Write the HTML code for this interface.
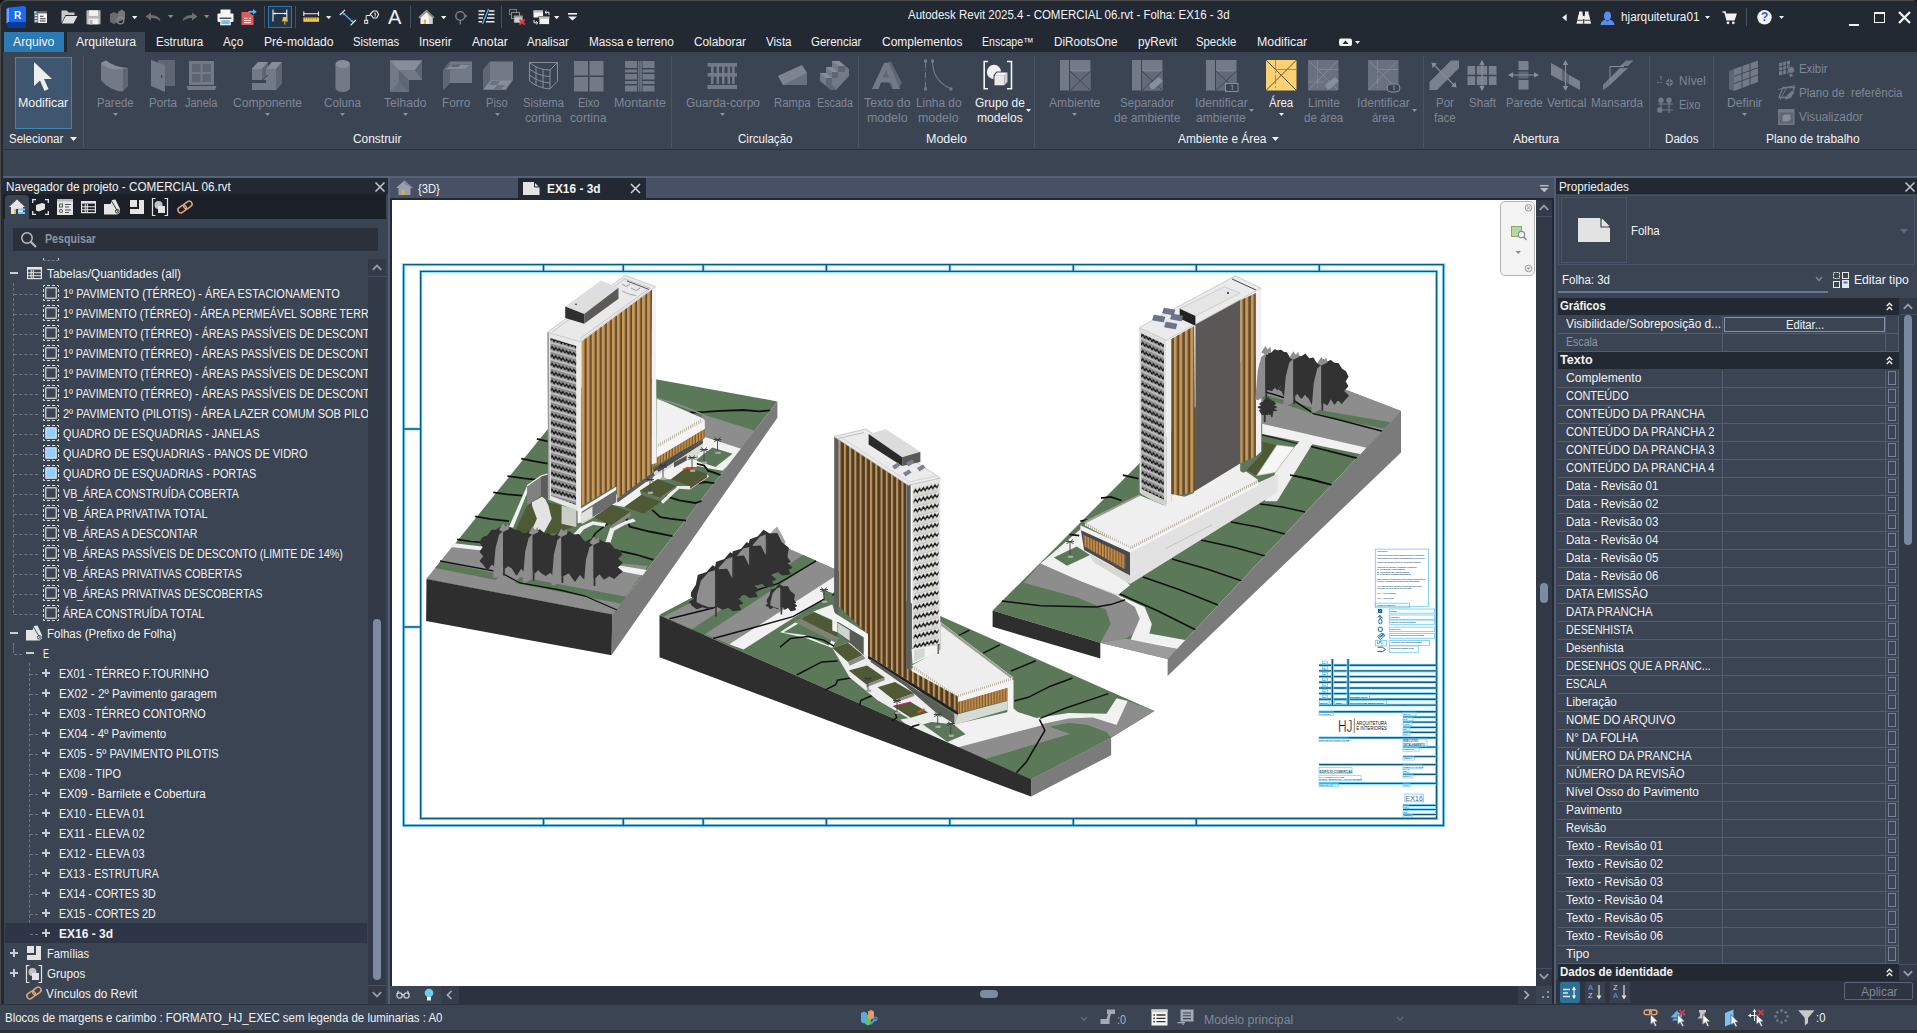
<!DOCTYPE html>
<html><head><meta charset="utf-8"><title>Autodesk Revit 2025.4 - COMERCIAL 06.rvt - Folha: EX16 - 3d</title><style>
html,body{margin:0;padding:0}
body{width:1917px;height:1033px;position:relative;overflow:hidden;background:#3b4453;font-family:"Liberation Sans",sans-serif;font-size:12px;line-height:16px;color:#f2f2f2}
.t{position:absolute;white-space:pre;display:block;transform-origin:0 0}
.r{position:absolute}
svg{position:absolute;overflow:visible}
</style></head><body>
<!-- sec_chrome -->
<div class="r" style="left:0px;top:0px;width:1917px;height:52px;background:#222933;"></div>
<span class="t" style="left:907.7px;top:7.3px;transform:scaleX(0.9560);color:#f2f2f2;">Autodesk Revit 2025.4 - COMERCIAL 06.rvt - Folha: EX16 - 3d</span>
<span class="t" style="left:1620.5px;top:9.1px;transform:scaleX(0.9806);color:#f2f2f2;">hjarquitetura01</span>
<div class="r" style="left:1849px;top:24px;width:10px;height:2px;background:#f2f2f2;"></div>
<div class="r" style="left:1874px;top:12px;width:9px;height:8px;border:1.6px solid #f2f2f2;border-top-width:2.4px"></div>
<svg style="left:1898px;top:10.5px" width="13" height="13"><path d="M1 1L12 12M12 1L1 12" stroke="#f2f2f2" stroke-width="2.3"/></svg>
<div class="r" style="left:4px;top:32px;width:60px;height:20px;background:#2b7ab3;"></div>
<span class="t" style="left:13.0px;top:34.1px;transform:scaleX(1.0166);color:#f2f2f2;">Arquivo</span>
<div class="r" style="left:67px;top:32px;width:78px;height:20px;background:#3b4453;"></div>
<span class="t" style="left:76.0px;top:34.1px;transform:scaleX(1.0230);color:#f2f2f2;">Arquitetura</span>
<span class="t" style="left:156.0px;top:34.1px;transform:scaleX(0.9703);color:#f2f2f2;">Estrutura</span>
<span class="t" style="left:223.3px;top:34.1px;transform:scaleX(0.9785);color:#f2f2f2;">Aço</span>
<span class="t" style="left:263.5px;top:34.1px;transform:scaleX(1.0104);color:#f2f2f2;">Pré-moldado</span>
<span class="t" style="left:352.9px;top:34.1px;transform:scaleX(0.9353);color:#f2f2f2;">Sistemas</span>
<span class="t" style="left:419.1px;top:34.1px;transform:scaleX(0.9758);color:#f2f2f2;">Inserir</span>
<span class="t" style="left:471.6px;top:34.1px;transform:scaleX(1.0133);color:#f2f2f2;">Anotar</span>
<span class="t" style="left:527.4px;top:34.1px;transform:scaleX(0.9628);color:#f2f2f2;">Analisar</span>
<span class="t" style="left:589.2px;top:34.1px;transform:scaleX(0.9771);color:#f2f2f2;">Massa e terreno</span>
<span class="t" style="left:693.9px;top:34.1px;transform:scaleX(0.9859);color:#f2f2f2;">Colaborar</span>
<span class="t" style="left:765.8px;top:34.1px;transform:scaleX(0.9659);color:#f2f2f2;">Vista</span>
<span class="t" style="left:811.4px;top:34.1px;transform:scaleX(0.9566);color:#f2f2f2;">Gerenciar</span>
<span class="t" style="left:881.8px;top:34.1px;transform:scaleX(0.9977);color:#f2f2f2;">Complementos</span>
<span class="t" style="left:982.3px;top:34.1px;transform:scaleX(0.8793);color:#f2f2f2;">Enscape™</span>
<span class="t" style="left:1053.9px;top:34.1px;transform:scaleX(0.9729);color:#f2f2f2;">DiRootsOne</span>
<span class="t" style="left:1137.5px;top:34.1px;transform:scaleX(0.9733);color:#f2f2f2;">pyRevit</span>
<span class="t" style="left:1196.4px;top:34.1px;transform:scaleX(0.9443);color:#f2f2f2;">Speckle</span>
<span class="t" style="left:1256.8px;top:34.1px;transform:scaleX(1.0309);color:#f2f2f2;">Modificar</span>
<svg style="left:1339px;top:38px" width="22" height="9"><rect x="0" y="0.5" width="13" height="7.5" rx="2" fill="#f2f2f2"/><polygon points="3.5,6 6.5,2.5 9.5,6" fill="#222933"/><polygon points="16,3 21,3 18.5,6" fill="#f2f2f2"/></svg>
<div class="r" style="left:0px;top:52px;width:1917px;height:98px;background:#3b4453;"></div>
<div class="r" style="left:4px;top:149px;width:1913px;height:1px;background:#2a313d;"></div>
<div class="r" style="left:0px;top:150px;width:1917px;height:27px;background:#3b4453;"></div>
<div class="r" style="left:3px;top:176px;width:1914px;height:2px;background:#566275;"></div>
<div class="r" style="left:83px;top:56px;width:1px;height:92px;background:#4a5466;"></div>
<div class="r" style="left:671px;top:56px;width:1px;height:92px;background:#4a5466;"></div>
<div class="r" style="left:858px;top:56px;width:1px;height:92px;background:#4a5466;"></div>
<div class="r" style="left:1034px;top:56px;width:1px;height:92px;background:#4a5466;"></div>
<div class="r" style="left:1423px;top:56px;width:1px;height:92px;background:#4a5466;"></div>
<div class="r" style="left:1649px;top:56px;width:1px;height:92px;background:#4a5466;"></div>
<div class="r" style="left:1713px;top:56px;width:1px;height:92px;background:#4a5466;"></div>
<div class="r" style="left:15px;top:57px;width:55px;height:70px;background:#3e566f;border:1px solid #3b88b8"></div>
<svg style="left:33px;top:61px" width="22" height="32"><polygon points="1,1 1,25 7,19.5 11.5,30 15.5,28 11,18 19,18" fill="#eeeeee"/></svg>
<span class="t" style="left:18.4px;top:94.5px;transform:scaleX(1.0309);color:#f2f2f2;">Modificar</span>
<span class="t" style="left:9.0px;top:130.5px;transform:scaleX(0.9577);color:#f2f2f2;">Selecionar</span>
<svg style="left:70.2px;top:136.8px" width="7" height="4.0"><polygon points="0,0 7,0 3.5,4.0" fill="#f2f2f2"/></svg>
<span class="t" style="left:96.7px;top:94.5px;transform:scaleX(0.9443);color:#7e8796;">Parede</span>
<svg style="left:112.5px;top:113.0px" width="5" height="3.0"><polygon points="0,0 5,0 2.5,3.0" fill="#8a93a1"/></svg>
<span class="t" style="left:149.0px;top:94.5px;transform:scaleX(0.9777);color:#7e8796;">Porta</span>
<span class="t" style="left:185.3px;top:94.5px;transform:scaleX(0.9159);color:#7e8796;">Janela</span>
<span class="t" style="left:232.5px;top:94.5px;transform:scaleX(1.0038);color:#7e8796;">Componente</span>
<svg style="left:264.5px;top:113.0px" width="5" height="3.0"><polygon points="0,0 5,0 2.5,3.0" fill="#8a93a1"/></svg>
<span class="t" style="left:324.0px;top:94.5px;transform:scaleX(0.9719);color:#7e8796;">Coluna</span>
<svg style="left:340.0px;top:113.0px" width="5" height="3.0"><polygon points="0,0 5,0 2.5,3.0" fill="#8a93a1"/></svg>
<span class="t" style="left:384.3px;top:94.5px;transform:scaleX(1.0080);color:#7e8796;">Telhado</span>
<svg style="left:403.0px;top:113.0px" width="5" height="3.0"><polygon points="0,0 5,0 2.5,3.0" fill="#8a93a1"/></svg>
<span class="t" style="left:441.9px;top:94.5px;transform:scaleX(0.9836);color:#7e8796;">Forro</span>
<span class="t" style="left:486.2px;top:94.5px;transform:scaleX(0.9294);color:#7e8796;">Piso</span>
<svg style="left:494.5px;top:113.0px" width="5" height="3.0"><polygon points="0,0 5,0 2.5,3.0" fill="#8a93a1"/></svg>
<span class="t" style="left:523.0px;top:94.5px;transform:scaleX(0.9473);color:#7e8796;">Sistema</span>
<span class="t" style="left:525.2px;top:109.5px;transform:scaleX(1.0165);color:#7e8796;">cortina</span>
<span class="t" style="left:577.8px;top:94.5px;transform:scaleX(0.9189);color:#7e8796;">Eixo</span>
<span class="t" style="left:570.2px;top:109.5px;transform:scaleX(1.0165);color:#7e8796;">cortina</span>
<span class="t" style="left:614.1px;top:94.5px;transform:scaleX(1.0354);color:#7e8796;">Montante</span>
<span class="t" style="left:685.5px;top:94.5px;transform:scaleX(0.9998);color:#7e8796;">Guarda-corpo</span>
<svg style="left:720.0px;top:113.0px" width="5" height="3.0"><polygon points="0,0 5,0 2.5,3.0" fill="#8a93a1"/></svg>
<span class="t" style="left:773.7px;top:94.5px;transform:scaleX(0.9481);color:#7e8796;">Rampa</span>
<span class="t" style="left:816.6px;top:94.5px;transform:scaleX(0.8968);color:#7e8796;">Escada</span>
<span class="t" style="left:863.8px;top:94.5px;transform:scaleX(1.0244);color:#7e8796;">Texto do</span>
<span class="t" style="left:866.7px;top:109.5px;transform:scaleX(1.0325);color:#7e8796;">modelo</span>
<span class="t" style="left:915.7px;top:94.5px;transform:scaleX(0.9886);color:#7e8796;">Linha do</span>
<span class="t" style="left:918.2px;top:109.5px;transform:scaleX(1.0325);color:#7e8796;">modelo</span>
<span class="t" style="left:974.6px;top:94.5px;transform:scaleX(0.9957);color:#f2f2f2;">Grupo de</span>
<span class="t" style="left:976.6px;top:109.5px;transform:scaleX(1.0082);color:#f2f2f2;">modelos</span>
<svg style="left:1026.405808733259px;top:109.0px" width="5" height="3.0"><polygon points="0,0 5,0 2.5,3.0" fill="#f2f2f2"/></svg>
<span class="t" style="left:1048.8px;top:94.5px;transform:scaleX(1.0127);color:#7e8796;">Ambiente</span>
<svg style="left:1072.0px;top:113.0px" width="5" height="3.0"><polygon points="0,0 5,0 2.5,3.0" fill="#8a93a1"/></svg>
<span class="t" style="left:1120.4px;top:94.5px;transform:scaleX(0.9685);color:#7e8796;">Separador</span>
<span class="t" style="left:1114.3px;top:109.5px;transform:scaleX(1.0055);color:#7e8796;">de ambiente</span>
<span class="t" style="left:1194.7px;top:94.5px;transform:scaleX(1.0129);color:#7e8796;">Identificar</span>
<span class="t" style="left:1196.1px;top:109.5px;transform:scaleX(1.0086);color:#7e8796;">ambiente</span>
<svg style="left:1249.3477311789773px;top:109.0px" width="5" height="3.0"><polygon points="0,0 5,0 2.5,3.0" fill="#8a93a1"/></svg>
<span class="t" style="left:1268.9px;top:94.5px;transform:scaleX(0.9553);color:#f2f2f2;">Área</span>
<svg style="left:1278.5px;top:113.0px" width="5" height="3.0"><polygon points="0,0 5,0 2.5,3.0" fill="#f2f2f2"/></svg>
<span class="t" style="left:1308.0px;top:94.5px;transform:scaleX(1.0015);color:#7e8796;">Limite</span>
<span class="t" style="left:1304.4px;top:109.5px;transform:scaleX(0.9651);color:#7e8796;">de área</span>
<span class="t" style="left:1357.2px;top:94.5px;transform:scaleX(1.0129);color:#7e8796;">Identificar</span>
<span class="t" style="left:1372.2px;top:109.5px;transform:scaleX(0.9435);color:#7e8796;">área</span>
<svg style="left:1411.8477311789773px;top:109.0px" width="5" height="3.0"><polygon points="0,0 5,0 2.5,3.0" fill="#8a93a1"/></svg>
<span class="t" style="left:1435.6px;top:94.5px;transform:scaleX(0.9567);color:#7e8796;">Por</span>
<span class="t" style="left:1433.7px;top:109.5px;transform:scaleX(0.9559);color:#7e8796;">face</span>
<span class="t" style="left:1469.0px;top:94.5px;transform:scaleX(0.9639);color:#7e8796;">Shaft</span>
<span class="t" style="left:1505.7px;top:94.5px;transform:scaleX(0.9443);color:#7e8796;">Parede</span>
<span class="t" style="left:1546.8px;top:94.5px;transform:scaleX(1.0003);color:#7e8796;">Vertical</span>
<span class="t" style="left:1591.4px;top:94.5px;transform:scaleX(0.9765);color:#7e8796;">Mansarda</span>
<span class="t" style="left:1726.9px;top:94.5px;transform:scaleX(1.0137);color:#7e8796;">Definir</span>
<svg style="left:1742.0px;top:113.0px" width="5" height="3.0"><polygon points="0,0 5,0 2.5,3.0" fill="#8a93a1"/></svg>
<span class="t" style="left:353.3px;top:130.5px;transform:scaleX(0.9936);color:#f2f2f2;">Construir</span>
<span class="t" style="left:737.8px;top:130.5px;transform:scaleX(0.9607);color:#f2f2f2;">Circulação</span>
<span class="t" style="left:925.5px;top:130.5px;transform:scaleX(1.0417);color:#f2f2f2;">Modelo</span>
<span class="t" style="left:1177.8px;top:130.5px;transform:scaleX(0.9889);color:#f2f2f2;">Ambiente e Área</span>
<span class="t" style="left:1513.4px;top:130.5px;transform:scaleX(1.0058);color:#f2f2f2;">Abertura</span>
<span class="t" style="left:1664.7px;top:130.5px;transform:scaleX(0.9693);color:#f2f2f2;">Dados</span>
<span class="t" style="left:1765.7px;top:130.5px;transform:scaleX(0.9952);color:#f2f2f2;">Plano de trabalho</span>
<svg style="left:1271.5px;top:136.8px" width="7" height="4.0"><polygon points="0,0 7,0 3.5,4.0" fill="#f2f2f2"/></svg>
<span class="t" style="left:1679.0px;top:72.8px;transform:scaleX(0.9782);color:#7e8796;">Nível</span>
<span class="t" style="left:1679.0px;top:96.8px;transform:scaleX(0.9189);color:#7e8796;">Eixo</span>
<span class="t" style="left:1799.0px;top:60.8px;transform:scaleX(0.9517);color:#7e8796;">Exibir</span>
<span class="t" style="left:1799.0px;top:84.8px;transform:scaleX(0.9637);color:#7e8796;">Plano de  referência</span>
<span class="t" style="left:1799.0px;top:109.1px;transform:scaleX(0.9806);color:#7e8796;">Visualizador</span>
<svg style="left:6px;top:6px" width="21" height="23"><polygon points="3,1.5 18,0 20,1 20,16 3,16" fill="#186bf2"/><polygon points="0.5,3 3,1.5 3,16 0.5,17.5" fill="#6fa0f6"/><polygon points="0.5,17.5 3,16 20,16 20,22 2,22" fill="#0a3b9c"/></svg>
<span class="t" style="left:13.5px;top:8.0px;transform:scaleX(0.8788);color:#ffffff;font-size:11.5px;line-height:15.33px;font-weight:bold;">R</span>
<svg style="left:32.5px;top:10px" width="15" height="14"><rect x="1" y="1" width="13" height="12" fill="#f4f4f4"/><rect x="1" y="1" width="13" height="2.4" fill="#5d6674"/><rect x="1.3" y="1.3" width="2" height="1.8" fill="#a8dcff"/><rect x="1" y="3.4" width="4.2" height="9.6" fill="#5d6674"/><rect x="1.8" y="4.6" width="2.6" height="1.5" fill="#e8e8e8"/><rect x="1.8" y="7.4" width="2.6" height="1.5" fill="#e8e8e8"/><rect x="1.8" y="10.2" width="2.6" height="1.5" fill="#e8e8e8"/><path d="M7 6.2H10.5M7 8.7H12.6M7 11H12.6" stroke="#333" stroke-width="1.1"/></svg>
<svg style="left:60.5px;top:9.5px" width="17" height="14"><polygon points="0.5,0.5 6,0.5 7.5,2.5 13.5,2.5 13.5,5 4.5,5 0.5,13" fill="#c9c9c9"/><polygon points="4.8,6 16.5,6 12.5,13.5 0.8,13.5" fill="#dddddd"/></svg>
<svg style="left:85.5px;top:9.5px" width="15" height="15"><rect x="0.5" y="0.3" width="14" height="14" fill="#b7b7b7"/><rect x="3" y="0.3" width="9" height="5.6" fill="#f2f2f2"/><rect x="2.6" y="8.6" width="9.8" height="5.7" fill="#f2f2f2"/><rect x="3.6" y="9.8" width="3" height="4.5" fill="#b7b7b7"/></svg>
<svg style="left:108.5px;top:9px" width="18" height="16"><polygon points="1,5 5,3 9,5 9,13 5,15 1,13" fill="#6a6a6a"/><polygon points="9,3 13,0.5 16,3 16,10 9,13" fill="#777"/><circle cx="11.5" cy="11.5" r="3.3" fill="none" stroke="#8a8a8a" stroke-width="1.2"/></svg>
<svg style="left:132.10000000000002px;top:15.6px" width="5.4" height="3.2"><polygon points="0,0 5.4,0 2.7,3.2" fill="#f0f0f0"/></svg>
<svg style="left:144.5px;top:12px" width="17" height="10"><path d="M6 0.5L0.5 4.5L6 8.5V6Q12 5.5 15.5 9.5Q15 3.5 6 3Z" fill="#6d6d6d"/></svg>
<svg style="left:167.60000000000002px;top:14.6px" width="5.4" height="3.2"><polygon points="0,0 5.4,0 2.7,3.2" fill="#8a8a8a"/></svg>
<svg style="left:180.5px;top:12px" width="17" height="10"><path d="M11 0.5L16.5 4.5L11 8.5V6Q5 5.5 1.5 9.5Q2 3.5 11 3Z" fill="#6d6d6d"/></svg>
<svg style="left:203.70000000000002px;top:14.6px" width="5.4" height="3.2"><polygon points="0,0 5.4,0 2.7,3.2" fill="#8a8a8a"/></svg>
<svg style="left:216.5px;top:8.5px" width="17" height="17"><rect x="3.5" y="0.5" width="10" height="5" fill="#f4f4f4"/><rect x="0.5" y="4.5" width="16" height="8.5" rx="1" fill="#f4f4f4"/><rect x="3.2" y="10" width="10.6" height="6.3" fill="#f4f4f4"/><rect x="4.4" y="11.2" width="8.2" height="3.9" fill="#6ebcf4"/><rect x="2.6" y="8.6" width="11.8" height="1.2" fill="#222933"/></svg>
<svg style="left:241px;top:9px" width="17" height="17"><polygon points="0.5,3 8,3 11,6 12.5,6 12.5,16 0.5,16" fill="#e05a5a"/><path d="M3 9.3H6.5M3 11.5H10M3 13.6H10M7.8 9.3H10" stroke="#fbdada" stroke-width="1.1"/><path d="M7.5 2.8H13" stroke="#5fb2f2" stroke-width="1.8"/><polygon points="12,0 15.8,2.8 12,5.6" fill="#5fb2f2"/></svg>
<div class="r" style="left:264px;top:6px;width:1px;height:22px;background:#474f5e"></div>
<div class="r" style="left:268px;top:6px;width:22px;height:20px;background:#22364b;border:1px solid #2c78ae"></div>
<svg style="left:271.5px;top:8.5px" width="18" height="18"><path d="M1 0.5V12.5M14.8 0.5V12.5M1 4.5H14.8" stroke="#f0f0f0" stroke-width="1.1" fill="none"/><polygon points="1,4.5 3.5,3.3 3.5,5.7" fill="#f0f0f0"/><polygon points="14.8,4.5 12.3,3.3 12.3,5.7" fill="#f0f0f0"/><path d="M10.8 8H14.8V10.5L15.8 12.3H9.8L10.8 10.5Z" fill="#f2c14c"/><path d="M12.8 12.3V15.5" stroke="#f2c14c" stroke-width="1"/></svg>
<div class="r" style="left:295px;top:6px;width:1px;height:22px;background:#474f5e"></div>
<svg style="left:302.5px;top:11px" width="17" height="12"><path d="M0.8 0.5V5M15.5 0.5V5M0.8 2.7H15.5" stroke="#f2f2f2" stroke-width="1.1" fill="none"/><rect x="0.3" y="6.5" width="15.7" height="4.3" fill="#f1c653"/><path d="M2.5 6.5V8.5M4.7 6.5V8.5M6.9 6.5V8.5M9.1 6.5V8.5M11.3 6.5V8.5M13.5 6.5V8.5" stroke="#8a6d1f" stroke-width="0.7"/></svg>
<svg style="left:325.90000000000003px;top:15.6px" width="5.4" height="3.2"><polygon points="0,0 5.4,0 2.7,3.2" fill="#f0f0f0"/></svg>
<svg style="left:338.5px;top:8.5px" width="18" height="17"><path d="M3.5 3.5L14.5 13.5" stroke="#52b0f0" stroke-width="1.3"/><polygon points="3.5,3.5 6.6,4.4 4.6,6.4" fill="#52b0f0"/><polygon points="14.5,13.5 11.4,12.6 13.4,10.6" fill="#52b0f0"/><path d="M0.8 6L6 0.8M11.5 16.3L16.8 11" stroke="#f0f0f0" stroke-width="1.1"/></svg>
<svg style="left:363.5px;top:10px" width="15" height="14"><polygon points="6.3,4 9.3,1 12.8,1 14.6,4.5 12.8,8 9.3,8" fill="none" stroke="#f0f0f0" stroke-width="1.1"/><path d="M6.3 5.5H2.2V10.5" stroke="#f0f0f0" stroke-width="1" fill="none"/><rect x="0.7" y="10.3" width="3" height="3" fill="none" stroke="#f0f0f0" stroke-width="1"/><path d="M10.2 3.4L11.2 2.9V6.5" stroke="#f0f0f0" stroke-width="0.9" fill="none"/></svg>
<span class="t" style="left:388.2px;top:4.4px;transform:scaleX(1.0302);color:#f0f0f0;font-size:19.5px;line-height:26.0px;">A</span>
<div class="r" style="left:410px;top:6px;width:1px;height:22px;background:#474f5e"></div>
<svg style="left:418px;top:8.5px" width="17" height="16"><polygon points="2.5,8 8.5,2.5 14.5,8 14.5,15 2.5,15" fill="#f4f4f4"/><polygon points="0.3,8.3 8.5,0.5 16.5,8.3 14.8,9.5 8.5,3.5 2,9.5" fill="#9a9a9a"/><polygon points="8.5,0.5 16.5,8.3 14.5,8 8.5,2.5" fill="#7a7a7a"/><rect x="5.8" y="10.5" width="2.3" height="4.5" fill="#e3b53e"/><polygon points="8.5,3.5 14.5,9 14.5,15 11,15 11,9" fill="#d0d0d0"/></svg>
<svg style="left:440.90000000000003px;top:15.6px" width="5.4" height="3.2"><polygon points="0,0 5.4,0 2.7,3.2" fill="#f0f0f0"/></svg>
<svg style="left:455px;top:9px" width="13" height="16"><circle cx="5.2" cy="7" r="4.4" fill="none" stroke="#8a8a8a" stroke-width="1.3"/><polygon points="9.2,4.4 12.6,7 9.2,9.6" fill="#777"/><path d="M5.2 11.4V15.5" stroke="#8a8a8a" stroke-width="1.2"/></svg>
<svg style="left:477.5px;top:9px" width="17" height="15"><path d="M0.5 2H7M0.5 5.5H6M0.5 9H5M0.5 12.7H4M11 2H16.5M10 5.5H16.5M9 9H16.5M8 12.7H16.5" stroke="#f0f0f0" stroke-width="1.5"/><path d="M10.5 0L4.5 15" stroke="#52b0f0" stroke-width="1.2"/></svg>
<div class="r" style="left:501px;top:6px;width:1px;height:22px;background:#474f5e"></div>
<svg style="left:508.5px;top:9px" width="17" height="16"><rect x="0.5" y="0.5" width="7" height="5" fill="none" stroke="#7a7a7a" stroke-width="1"/><rect x="2.5" y="3.5" width="8" height="6" fill="#222933" stroke="#8a8a8a" stroke-width="1"/><rect x="4.8" y="6.5" width="9" height="7.5" fill="#9a9a9a"/><rect x="5.8" y="8.5" width="7" height="4.5" fill="#cfcfcf"/><path d="M10.5 10.5L15.8 15.5M15.8 10.5L10.5 15.5" stroke="#e8343c" stroke-width="1.9"/></svg>
<svg style="left:532.5px;top:9.5px" width="18" height="15"><rect x="0.5" y="0.5" width="9.5" height="7" fill="#f2f2f2"/><rect x="0.5" y="0.5" width="9.5" height="2" fill="#bcbcbc"/><rect x="6" y="6.5" width="10.5" height="8" fill="#f2f2f2" stroke="#222933" stroke-width="0.8"/><rect x="6" y="6.5" width="10.5" height="2.2" fill="#bcbcbc"/><path d="M12 2.3H16V4.8M12 2.3L13.6 0.8M12 2.3L13.6 3.8M4.8 12.8H1V10M4.8 12.8L3.2 11.3M4.8 12.8L3.2 14.3" stroke="#f2f2f2" stroke-width="1" fill="none"/></svg>
<svg style="left:554.0px;top:15.6px" width="5.4" height="3.2"><polygon points="0,0 5.4,0 2.7,3.2" fill="#f0f0f0"/></svg>
<svg style="left:567.5px;top:12.5px" width="9" height="8"><rect x="0" y="0" width="9" height="1.6" fill="#f0f0f0"/><polygon points="0,3.6 9,3.6 4.5,7.6" fill="#f0f0f0"/></svg>
<svg style="left:1561.5px;top:13.5px" width="5" height="7.5"><polygon points="4.6,0 4.6,7.2 0.2,3.6" fill="#f0f0f0"/></svg>
<svg style="left:1575.5px;top:11px" width="16" height="13.5"><rect x="3" y="0.5" width="3.5" height="4" fill="#f0f0f0"/><rect x="9" y="0.5" width="3.5" height="4" fill="#f0f0f0"/><path d="M2.5 3.5H6.8L7.3 12.8H0.5ZM8.7 3.5H13L15 12.8H8.2Z" fill="#f0f0f0"/><rect x="6.6" y="5" width="2.2" height="3" fill="#f0f0f0"/><path d="M1.4 9.3H6.6M8.8 9.3H14" stroke="#222933" stroke-width="0.9"/></svg>
<svg style="left:1599.5px;top:10.5px" width="15" height="14"><ellipse cx="7.5" cy="5" rx="3.6" ry="4.6" fill="#5a8df0"/><path d="M0.5 14Q1 9.5 5.3 8.8L7.5 10.5L9.7 8.8Q14 9.5 14.5 14Z" fill="#5a8df0"/></svg>
<svg style="left:1704.9px;top:16.2px" width="5" height="3"><polygon points="0,0 5,0 2.5,3" fill="#f0f0f0"/></svg>
<svg style="left:1721.5px;top:11px" width="15" height="14"><path d="M0.5 1H3L5 8.8H12L13.8 3.2H4" fill="none" stroke="#f2f2f2" stroke-width="1.6"/><polygon points="4,3.2 13.8,3.2 12,8.8 5.2,8.8" fill="#f2f2f2"/><circle cx="6" cy="11.8" r="1.4" fill="#f2f2f2"/><circle cx="11.3" cy="11.8" r="1.4" fill="#f2f2f2"/></svg>
<div class="r" style="left:1746px;top:8px;width:1px;height:18px;background:#4b5362"></div>
<svg style="left:1756.5px;top:10px" width="15" height="15"><circle cx="7.5" cy="7.3" r="7.2" fill="#f4f4f4"/></svg>
<span class="t" style="left:1761.0px;top:8.8px;transform:scaleX(0.9453);color:#2a56c8;font-size:12.5px;line-height:16.67px;font-weight:bold;">?</span>
<svg style="left:1779.2px;top:16.2px" width="5" height="3"><polygon points="0,0 5,0 2.5,3" fill="#f0f0f0"/></svg>
<svg style="left:100px;top:60px" width="29" height="32"><path d="M1 3L6 0.5Q14 8 28 8V26Q14 31 1 20Z" fill="#727a88"/><path d="M23 8.6L28 8V26L23 31.5Z" fill="#5e6674"/><path d="M1 3Q10 12 23 8.6V31.5Q10 31 1 20Z" fill="#727a88"/><path d="M1 3L6 0.5Q14 7 28 8L23 8.6Q10 12 1 3Z" fill="#868e9b"/></svg>
<svg style="left:150px;top:59px" width="26" height="34"><rect x="8" y="1" width="17" height="26" fill="#5e6674"/><polygon points="1,1 15,6 15,33 1,27" fill="#727a88"/><rect x="11" y="16" width="1.2" height="3" fill="#3b4453"/></svg>
<svg style="left:186px;top:60px" width="31" height="31"><rect x="3" y="1" width="25" height="24" fill="#727a88"/><rect x="6" y="4" width="8.5" height="8" fill="#5e6674"/><rect x="16.5" y="4" width="8.5" height="8" fill="#5e6674"/><rect x="6" y="14" width="8.5" height="8" fill="#5e6674"/><rect x="16.5" y="14" width="8.5" height="8" fill="#5e6674"/><polygon points="0.5,26 30.5,26 29,30 2,30" fill="#727a88"/></svg>
<svg style="left:251px;top:61px" width="32" height="30"><polygon points="1,8 7,1 17,1 17,19 1,19" fill="#727a88"/><polygon points="1,8 7,1 17,1 11,8" fill="#868e9b"/><polygon points="11,8 17,1 17,14 11,19" fill="#5e6674"/><polygon points="1,22 15,22 15,8 21,1 31,1 31,22 25,29 1,29" fill="#727a88"/><polygon points="15,8 21,1 31,1 25,8" fill="#868e9b"/><polygon points="25,8 31,1 31,22 25,29" fill="#5e6674"/><path d="M1 19.5H11L17 14" stroke="#3b4453" stroke-width="1" fill="none"/></svg>
<svg style="left:335px;top:59px" width="16" height="34"><rect x="0.5" y="5" width="14.5" height="24" fill="#727a88"/><ellipse cx="7.75" cy="29" rx="7.25" ry="4" fill="#727a88"/><ellipse cx="7.75" cy="5" rx="7.25" ry="4" fill="#868e9b"/></svg>
<svg style="left:389px;top:60px" width="34" height="33"><polygon points="1,0.5 33,0.5 33,20 20,20 20,32 1,32" fill="#727a88"/><polygon points="1,0.5 33,0.5 26,10 10,10" fill="#868e9b"/><polygon points="33,0.5 33,20 26,10" fill="#5e6674"/><polygon points="10,10 20,20 20,32 10,22" fill="#5e6674"/><polygon points="1,32 10,22 20,32" fill="#5e6674" opacity="0.6"/></svg>
<svg style="left:442px;top:61px" width="31" height="30"><polygon points="8,0.5 30,0.5 30,22 8,22 1,29 1,9" fill="#727a88"/><polygon points="1,9 8,0.5 8,22 1,29" fill="#5e6674"/><polygon points="3,8.5 9,3.5 29,3.5 23,8.5" fill="#868e9b" stroke="#5e6674" stroke-width="0.6"/><polygon points="8,6 11,3.7 19,3.7 16,6" fill="#5e6674"/></svg>
<svg style="left:482px;top:61px" width="32" height="30"><polygon points="8,0.5 31,0.5 31,19 24,29 1,29 1,9" fill="#727a88"/><polygon points="1,9 8,0.5 8,19 1,29" fill="#5e6674"/><polygon points="2,28 9,19.5 30,19.5 23,28" fill="#868e9b"/><polygon points="7,24 10,20 18,20 15,24" fill="#5e6674" opacity="0.7"/><polygon points="15,24 23,24 20,28 12,28" fill="#5e6674" opacity="0.7"/></svg>
<svg style="left:528px;top:61px" width="31" height="31"><g fill="none" stroke="#868e9b" stroke-width="1"><path d="M1.5 1.5H29.5V20L22 28Q10 27 1.5 20Z"/><path d="M1.5 1.5Q10 9 22 9L29.5 1.5M22 9V28M1.5 8Q10 15 22 15.5M1.5 14Q10 21 22 22M8 5.5V24M15 8V26.5"/></g></svg>
<svg style="left:574px;top:61px" width="30" height="31"><rect x="0" y="0" width="14" height="14.5" fill="#727a88"/><rect x="15.5" y="0" width="14" height="14.5" fill="#727a88"/><rect x="0" y="16" width="14" height="14.5" fill="#727a88"/><rect x="15.5" y="16" width="14" height="14.5" fill="#727a88"/></svg>
<svg style="left:625px;top:61px" width="30" height="31"><rect x="0" y="0" width="12" height="7" fill="#727a88"/><rect x="17.5" y="0" width="12" height="7" fill="#727a88"/><rect x="0" y="8.5" width="12" height="3" fill="#727a88"/><rect x="17.5" y="8.5" width="12" height="3" fill="#727a88"/><rect x="0" y="13" width="12" height="5.5" fill="#727a88"/><rect x="17.5" y="13" width="12" height="5.5" fill="#727a88"/><rect x="0" y="20" width="12" height="3" fill="#727a88"/><rect x="17.5" y="20" width="12" height="3" fill="#727a88"/><rect x="0" y="24.5" width="12" height="6" fill="#727a88"/><rect x="17.5" y="24.5" width="12" height="6" fill="#727a88"/><rect x="13" y="0" width="1.5" height="30.5" fill="#727a88"/><rect x="15.2" y="0" width="1.5" height="30.5" fill="#727a88"/></svg>
<svg style="left:707px;top:62px" width="31" height="28"><rect x="0.5" y="1" width="29.5" height="3.6" fill="#727a88"/><rect x="0.5" y="11" width="29.5" height="3.6" fill="#727a88"/><rect x="0.5" y="23" width="29.5" height="4" fill="#727a88"/><rect x="4" y="4" width="2.6" height="18" fill="#727a88"/><rect x="9.5" y="4" width="2.6" height="18" fill="#727a88"/><rect x="15" y="4" width="2.6" height="18" fill="#727a88"/><rect x="20.5" y="4" width="2.6" height="18" fill="#727a88"/><rect x="25" y="4" width="2.6" height="18" fill="#727a88"/></svg>
<svg style="left:777px;top:64px" width="31" height="23"><polygon points="1,12 25,1 30,9 30,21 6,21" fill="#727a88"/><polygon points="1,12 25,1 30,9 6,21" fill="#868e9b" opacity="0.55"/><polygon points="6,21 30,9 30,21" fill="#5e6674" opacity="0.5"/></svg>
<svg style="left:819px;top:60px" width="31" height="31"><polygon points="13,1 20,1 30,9 30,16 17,30 12,30 1,21 1,13 7,13 7,7 13,7" fill="#727a88"/><polygon points="13,1 20,1 26,6 19,6" fill="#868e9b"/><polygon points="7,7 13,7 19,12 13,12" fill="#868e9b"/><polygon points="1,13 7,13 13,18 7,18" fill="#868e9b"/><polygon points="19,6 26,6 26,12 19,12" fill="#5e6674"/><polygon points="13,12 19,12 19,18 13,18" fill="#5e6674"/><polygon points="7,18 13,18 13,24 17,30 12,30 7,25" fill="#5e6674"/></svg>
<svg style="left:871px;top:61px" width="32" height="30"><polygon points="14,2 20,0.5 31,22 27,28 21,28 18,21 10,21 7,28 1,28" fill="#5e6674"/><path d="M1 28L13 2H18L29 28H22.5L20 21.5H10L7.5 28ZM12 16.5H18L15 8.5Z" fill="#727a88" fill-rule="evenodd"/></svg>
<svg style="left:923px;top:59px" width="31" height="33"><path d="M2.5 3V29" stroke="#727a88" stroke-width="1" stroke-dasharray="6 1.5 1 1.5" fill="none"/><path d="M9.5 3Q10 22 27.5 29.5" stroke="#727a88" stroke-width="1.1" fill="none"/><rect x="1" y="0.5" width="3" height="3" fill="#727a88"/><rect x="8" y="0.5" width="3" height="3" fill="#727a88"/><rect x="1" y="28.5" width="3" height="3" fill="#727a88"/><rect x="26.5" y="28.5" width="3" height="3" fill="#727a88"/></svg>
<svg style="left:983px;top:60px" width="30" height="30"><path d="M5 1.5H1.2V28.8H5M24 1.5H28.5V28.8H24" fill="none" stroke="#f3f3f3" stroke-width="1.6"/><circle cx="11" cy="12" r="7.2" fill="#f1f1f1"/><polygon points="10.5,15 13.5,11.5 25,11.5 25,22 22,25.5 10.5,25.5" fill="#3b4453"/><rect x="11.5" y="15.8" width="10" height="9.5" fill="#e9e9e9"/><polygon points="11.5,15.8 14,12.5 24.5,12.5 21.5,15.8" fill="#f6f6f6"/><polygon points="21.5,15.8 24.5,12.5 24.5,22 21.5,25.3" fill="#cfcfcf"/></svg>
<svg style="left:1060px;top:60px" width="31" height="31"><rect x="0" y="0" width="30.5" height="30.5" fill="#727a88"/><rect x="10" y="11" width="20.5" height="19.5" fill="#5e6674" opacity="0.75"/><path d="M9.5 0V30.5" stroke="#3b4453" stroke-width="1"/><path d="M10 11H30.5" stroke="#868e9b" stroke-width="0.8"/><path d="M10 11L30.5 30.5M30.5 11L10 30.5" stroke="#3b4453" stroke-width="0.9"/></svg>
<svg style="left:1132px;top:60px" width="32" height="33"><rect x="0" y="0" width="30.5" height="30.5" fill="#727a88"/><rect x="10" y="11" width="20.5" height="19.5" fill="#5e6674" opacity="0.75"/><path d="M9.5 0V30.5" stroke="#3b4453" stroke-width="1"/><path d="M10 11H30.5" stroke="#868e9b" stroke-width="0.8"/><path d="M10 11L30.5 30.5M30.5 11L10 30.5" stroke="#3b4453" stroke-width="0.9"/><polygon points="16,30 18,24 27,17 31,21 22,29" fill="#868e9b"/><polygon points="16,30 17,26.5 19.5,29" fill="#5e6674"/></svg>
<svg style="left:1205.5px;top:60px" width="33" height="33"><rect x="0" y="0" width="30.5" height="30.5" fill="#727a88"/><rect x="10" y="11" width="20.5" height="19.5" fill="#5e6674" opacity="0.75"/><path d="M9.5 0V30.5" stroke="#3b4453" stroke-width="1"/><path d="M10 11H30.5" stroke="#868e9b" stroke-width="0.8"/><path d="M10 11L30.5 30.5M30.5 11L10 30.5" stroke="#3b4453" stroke-width="0.9"/><rect x="19.5" y="23.5" width="12.5" height="8" fill="#3b4453" stroke="#868e9b" stroke-width="1"/><path d="M25 25.5L26.3 25V30" stroke="#868e9b" stroke-width="1" fill="none"/></svg>
<svg style="left:1266px;top:60px" width="31" height="31"><rect x="0" y="0" width="30.5" height="30.5" rx="1.5" fill="#fbd174"/><path d="M0.5 0.5L30 30M30 0.5L0.5 30" stroke="#5b5340" stroke-width="1"/><path d="M9.5 0V30.5" stroke="#8f7c4b" stroke-width="0.8" stroke-dasharray="9 2 2 2"/><path d="M9.5 9.5H30.5" stroke="#8f7c4b" stroke-width="0.8"/></svg>
<svg style="left:1308px;top:60px" width="33" height="33"><rect x="0" y="0" width="30.5" height="30.5" rx="1.5" fill="#697180"/><path d="M0.5 0.5L30 30M30 0.5L0.5 30" stroke="#868e9b" stroke-width="0.8"/><path d="M9.5 0V30.5" stroke="#868e9b" stroke-width="0.7" stroke-dasharray="9 2 2 2"/><path d="M9.5 9.5H30.5" stroke="#868e9b" stroke-width="0.7"/><path d="M0 22H16" stroke="#868e9b" stroke-width="0.7"/><polygon points="16,30 18,24 27,17 31,21 22,29" fill="#868e9b"/><polygon points="16,30 17,26.5 19.5,29" fill="#5e6674"/></svg>
<svg style="left:1368px;top:60px" width="33" height="33"><rect x="0" y="0" width="30.5" height="30.5" rx="1.5" fill="#697180"/><path d="M0.5 0.5L30 30M30 0.5L0.5 30" stroke="#868e9b" stroke-width="0.8"/><path d="M9.5 0V30.5" stroke="#868e9b" stroke-width="0.7" stroke-dasharray="9 2 2 2"/><path d="M9.5 9.5H30.5" stroke="#868e9b" stroke-width="0.7"/><rect x="19" y="24" width="13" height="8" rx="4" fill="#3b4453" stroke="#868e9b" stroke-width="1"/><path d="M24.8 26.2L26.1 25.7V30.3" stroke="#868e9b" stroke-width="1" fill="none"/></svg>
<svg style="left:0;top:0" width="0" height="0"><defs><pattern id="hh" width="2" height="2" patternUnits="userSpaceOnUse" patternTransform="rotate(45)"><rect width="2" height="2" fill="#727a88"/><rect width="0.7" height="2" fill="#868e9b"/></pattern></defs></svg>
<svg style="left:1429px;top:60px" width="32" height="32"><polygon points="22,0.5 30,0.5 30,8 8,30 0.5,30 0.5,22" fill="url(#hh)"/><path d="M4 4L26 26" stroke="#868e9b" stroke-width="1.1"/><polygon points="2.5,2.5 8,3.5 3.5,8" fill="#868e9b"/><polygon points="27.5,27.5 22,26.5 26.5,22" fill="#868e9b"/></svg>
<svg style="left:1467px;top:60px" width="31" height="32"><rect x="0.5" y="6" width="29" height="19" fill="url(#hh)"/><path d="M9 6V25M21 6V25M0.5 15.5H29.5" stroke="#3b4453" stroke-width="1.6"/><path d="M15 1V30" stroke="#868e9b" stroke-width="1.1"/><polygon points="12.3,5 15,0 17.7,5" fill="#868e9b"/><polygon points="12.3,26 15,31 17.7,26" fill="#868e9b"/></svg>
<svg style="left:1508px;top:60px" width="32" height="32"><rect x="10.5" y="1" width="10" height="9" fill="url(#hh)"/><rect x="10.5" y="20" width="10" height="9.5" fill="url(#hh)"/><rect x="10.5" y="11.5" width="10" height="7" fill="#5e6674"/><path d="M1 15H30" stroke="#868e9b" stroke-width="1.1"/><polygon points="5,12.3 0,15 5,17.7" fill="#868e9b"/><polygon points="26,12.3 31,15 26,17.7" fill="#868e9b"/></svg>
<svg style="left:1550px;top:60px" width="32" height="32"><polygon points="1,3 12,9 12,21 1,15" fill="url(#hh)"/><polygon points="19,15 30,21 30,30 19,24" fill="url(#hh)"/><polygon points="12,9 19,15 19,24 12,21" fill="#5e6674"/><path d="M15.5 1V30" stroke="#868e9b" stroke-width="1.1"/><polygon points="12.8,5 15.5,0 18.2,5" fill="#868e9b"/><polygon points="12.8,26 15.5,31 18.2,26" fill="#868e9b"/></svg>
<svg style="left:1602px;top:60px" width="32" height="32"><polygon points="24,0.5 31.5,0.5 26,6 18,6" fill="#727a88"/><polygon points="18,8 26,8 8,25 1,30 1,25" fill="url(#hh)"/><path d="M8 24V6.5H22" stroke="#868e9b" stroke-width="1" fill="none"/><polygon points="1,25 8,19 8,25 1,30" fill="#727a88"/></svg>
<svg style="left:1657px;top:75px" width="18" height="12"><path d="M0 7.5H6" stroke="#727a88" stroke-width="1" stroke-dasharray="2 1.2"/><path d="M3 1.5L4 1V5" stroke="#727a88" stroke-width="0.9" fill="none"/><polygon points="8,7.5 12.5,3 17,7.5 12.5,12" fill="#727a88"/><path d="M12.5 3V12M8 7.5H17" stroke="#3b4453" stroke-width="0.9"/></svg>
<svg style="left:1657px;top:97px" width="18" height="17"><path d="M4 3V16M12 3V16M1 7H16M1 13H16" stroke="#727a88" stroke-width="1.2" fill="none"/><circle cx="4" cy="3.3" r="2.7" fill="#727a88"/><circle cx="12" cy="3.3" r="2.7" fill="#727a88"/><circle cx="2.8" cy="13" r="2.7" fill="#727a88"/></svg>
<svg style="left:1728px;top:60px" width="32" height="32"><polygon points="6,9 30,0.5 30,22 6,31" fill="#727a88"/><polygon points="1,11 6,9 6,31 1,29" fill="#5e6674"/><path d="M14 6.2V28.2M22 3.4V25.2M6 16.3L30 7.7M6 23.6L30 14.8" stroke="#3b4453" stroke-width="0.9"/></svg>
<svg style="left:1778px;top:60px" width="18" height="18"><polygon points="1,3 12,0.5 12,13 1,15.5" fill="#727a88"/><path d="M4.7 2V15M8.4 1.3V14M1 7L12 4.6M1 11L12 8.8" stroke="#3b4453" stroke-width="0.9"/><circle cx="13" cy="10" r="3.6" fill="#727a88" stroke="#3b4453" stroke-width="0.8"/><rect x="11.5" y="14" width="3" height="2.6" fill="#727a88"/></svg>
<svg style="left:1778px;top:84px" width="18" height="18"><path d="M1 13.5L5 3.5H16.5L12.5 13.5Z" fill="none" stroke="#727a88" stroke-width="1.3"/><path d="M0 5.5L17 1.5M2 16L9 3" stroke="#727a88" stroke-width="1"/><polygon points="7,15.5 8,12.2 14,6.5 16.5,9 10.5,14.7" fill="#727a88"/></svg>
<svg style="left:1778px;top:109px" width="17" height="16"><rect x="0.8" y="0.8" width="15" height="14.5" fill="#5e6674" stroke="#727a88" stroke-width="1.4"/><rect x="0.8" y="0.8" width="15" height="2.6" fill="#727a88"/><polygon points="4.5,7.5 6.5,5.5 12.5,5.5 12.5,10.5 10.5,12.5 4.5,12.5" fill="#868e9b"/></svg>
<div class="r" style="left:0px;top:0px;width:1917px;height:1px;background:#4c4c4c;"></div>
<div class="r" style="left:0px;top:0px;width:1.2px;height:1033px;background:#4b4946;"></div>
<div class="r" style="left:1.2px;top:1px;width:1.8px;height:1032px;background:#222933;"></div>
<svg style="left:0;top:0" width="8" height="8"><path d="M0 0H7A7 7 0 0 0 0 7Z" fill="#151515"/><path d="M0.6 7A6.4 6.4 0 0 1 7 0.6" fill="none" stroke="#4b4946" stroke-width="1.2"/></svg>
<svg style="left:1911px;top:0" width="6" height="6"><path d="M6 0H1A5 5 0 0 1 6 5Z" fill="#1a1a1a"/></svg>
<!-- sec_browser -->
<div class="r" style="left:3px;top:178px;width:385px;height:16px;background:#222933;"></div>
<span class="t" style="left:6.0px;top:178.6px;transform:scaleX(0.9757);color:#f2f2f2;">Navegador de projeto - COMERCIAL 06.rvt</span>
<svg style="left:375px;top:182px" width="10" height="10"><path d="M0.5 0.5L9.5 9.5M9.5 0.5L0.5 9.5" stroke="#c4c8d2" stroke-width="1.5"/></svg>
<div class="r" style="left:3px;top:194px;width:383px;height:25px;background:#1b1f27;"></div>
<div class="r" style="left:5px;top:195px;width:24px;height:24px;background:#3b4453;border-radius:4px 4px 0 0"></div>
<svg style="left:9px;top:199px" width="17" height="16"><polygon points="0,8 8,0.5 16,8 14,8 14,15 9,15 9,10 6,10 6,15 2,15 2,8" fill="#e4e4e4"/><rect x="5" y="10" width="2" height="5" fill="#e8b93c"/><rect x="9" y="9.5" width="7" height="2" fill="#7fc8f8"/><rect x="9" y="13" width="7" height="2" fill="#7fc8f8"/></svg>
<svg style="left:32px;top:199px" width="17" height="16"><path d="M4 0.7H0.7V4M13 0.7H16.3V4M4 15.3H0.7V12M13 15.3H16.3V12" fill="none" stroke="#e4e4e4" stroke-width="1.3"/><polygon points="4,6 10,4 13,5 13,10 7,12.5 4,11.5" fill="#e4e4e4"/></svg>
<svg style="left:57px;top:199px" width="16" height="16"><rect x="0" y="0" width="16" height="16" fill="#e4e4e4"/><rect x="0" y="0" width="16" height="2.5" fill="#b5b9c0"/><rect x="2.5" y="5" width="3" height="3" fill="none" stroke="#555" stroke-width="1"/><circle cx="4" cy="12" r="1.6" fill="none" stroke="#555"/><path d="M8 5.5H14M8 8H12M8 11H14M8 13.5H12" stroke="#555" stroke-width="1"/></svg>
<svg style="left:81px;top:199px" width="15" height="16"><rect x="0.6" y="2.6" width="13.8" height="11" fill="none" stroke="#e4e4e4" stroke-width="1.2"/><rect x="0" y="2" width="15" height="2.6" fill="#e4e4e4"/><path d="M0 7.8H15M0 10.8H15M4.2 5V14M6.3 5V14" stroke="#e4e4e4" stroke-width="1.1"/></svg>
<svg style="left:104px;top:199px" width="17" height="16"><polygon points="0,5 6.5,5 8,1 11.5,0.5 16,10 16,13.5 13.5,15.5 0,15.5" fill="#e4e4e4"/><path d="M7.5 2L14 13" stroke="#1b1f27" stroke-width="0.9"/><circle cx="13.3" cy="12.3" r="1.9" fill="none" stroke="#1b1f27" stroke-width="0.9"/></svg>
<svg style="left:129px;top:199px" width="16" height="16"><rect x="1" y="1" width="7" height="7" fill="#e4e4e4"/><polygon points="10,1 15,1 15,15 1,15 1,10 10,10" fill="#e4e4e4"/></svg>
<svg style="left:152px;top:198px" width="16" height="18"><path d="M3.5 0.5H0.5V17.5H3.5M12.5 0.5H15.5V17.5H12.5" fill="none" stroke="#e4e4e4" stroke-width="1.2"/><circle cx="6.5" cy="7" r="4" fill="#bfc3c9"/><rect x="6" y="8" width="7" height="7" fill="#e4e4e4"/></svg>
<svg style="left:177px;top:200px" width="16" height="14"><g fill="none" stroke="#e0a878" stroke-width="1.5" transform="rotate(-35 8 7)"><rect x="0" y="4.2" width="9" height="5.6" rx="2.8"/><rect x="7" y="4.2" width="9" height="5.6" rx="2.8"/></g></svg>
<div class="r" style="left:3px;top:219px;width:1.4px;height:785px;background:#222933;"></div>
<div class="r" style="left:13px;top:228px;width:365px;height:23px;background:#2a303c;"></div>
<svg style="left:20px;top:231px" width="18" height="18"><circle cx="7" cy="7" r="5.2" fill="none" stroke="#b9bfc9" stroke-width="1.5"/><path d="M10.8 10.8L16 16" stroke="#b9bfc9" stroke-width="2"/></svg>
<span class="t" style="left:45.0px;top:231.1px;transform:scaleX(0.8891);color:#8a94a5;font-weight:bold;">Pesquisar</span>
<div class="r" style="left:368px;top:259px;width:18px;height:745px;background:#323a48;"></div>
<div class="r" style="left:368px;top:276px;width:18px;height:1px;background:#465064;"></div>
<div class="r" style="left:368px;top:985px;width:18px;height:1px;background:#465064;"></div>
<svg style="left:372px;top:263.5px" width="10" height="7"><path d="M0.8 5.8L5 1.6L9.2 5.8" fill="none" stroke="#949cab" stroke-width="1.9"/></svg>
<svg style="left:372px;top:991px" width="10" height="7"><path d="M0.8 1.2L5 5.4L9.2 1.2" fill="none" stroke="#949cab" stroke-width="1.9"/></svg>
<div class="r" style="left:373px;top:619px;width:8px;height:361px;background:#7d8ba2;border-radius:4px"></div>
<div class="r" style="left:43px;top:260.0px;width:16px;height:0;border-top:1px dashed #6f7888"></div>
<div class="r" style="left:43px;top:258px;width:1px;height:2px;background:#cfd3da;"></div>
<div class="r" style="left:58px;top:258px;width:1px;height:2px;background:#cfd3da;"></div>
<div class="r" style="left:10px;top:272px;width:8px;height:2px;background:#c9cdd3;"></div>
<svg style="left:27px;top:265px" width="15" height="16"><rect x="0.6" y="2.6" width="13.8" height="11" fill="none" stroke="#e4e4e4" stroke-width="1.2"/><rect x="0" y="2" width="15" height="2.6" fill="#e4e4e4"/><path d="M0 7.8H15M0 10.8H15M4.2 5V14M6.3 5V14" stroke="#e4e4e4" stroke-width="1.1"/></svg>
<span class="t" style="left:47.0px;top:266.1px;transform:scaleX(0.9851);color:#f2f2f2;">Tabelas/Quantidades (all)</span>
<div class="r" style="left:13px;top:283px;width:0;height:330px;border-left:1px dashed #6f7888"></div>
<div class="r" style="left:0;top:258px;width:368px;height:746px;overflow:hidden">
<div class="r" style="left:14px;top:35.7px;width:24px;height:0;border-top:1px dashed #6f7888"></div>
<svg style="left:43px;top:27px" width="16" height="16"><rect x="0.5" y="0.5" width="15" height="15" fill="none" stroke="#e8e8e8" stroke-width="1" stroke-dasharray="3 2" stroke-dashoffset="1.5"/><rect x="2.8" y="2.8" width="10.4" height="10.4" fill="none" stroke="#e8e8e8" stroke-width="1.1"/></svg>
<span class="t" style="left:63.0px;top:28.1px;transform:scaleX(0.9163);color:#f2f2f2;">1º PAVIMENTO (TÉRREO) - ÁREA ESTACIONAMENTO</span>
<div class="r" style="left:14px;top:55.7px;width:24px;height:0;border-top:1px dashed #6f7888"></div>
<svg style="left:43px;top:47px" width="16" height="16"><rect x="0.5" y="0.5" width="15" height="15" fill="none" stroke="#e8e8e8" stroke-width="1" stroke-dasharray="3 2" stroke-dashoffset="1.5"/><rect x="2.8" y="2.8" width="10.4" height="10.4" fill="none" stroke="#e8e8e8" stroke-width="1.1"/></svg>
<span class="t" style="left:63.0px;top:48.1px;transform:scaleX(0.8872);color:#f2f2f2;">1º PAVIMENTO (TÉRREO) - ÁREA PERMEÁVEL SOBRE TERRENO</span>
<div class="r" style="left:14px;top:75.7px;width:24px;height:0;border-top:1px dashed #6f7888"></div>
<svg style="left:43px;top:67px" width="16" height="16"><rect x="0.5" y="0.5" width="15" height="15" fill="none" stroke="#e8e8e8" stroke-width="1" stroke-dasharray="3 2" stroke-dashoffset="1.5"/><rect x="2.8" y="2.8" width="10.4" height="10.4" fill="none" stroke="#e8e8e8" stroke-width="1.1"/></svg>
<span class="t" style="left:63.0px;top:68.1px;transform:scaleX(0.8942);color:#f2f2f2;">1º PAVIMENTO (TÉRREO) - ÁREAS PASSÍVEIS DE DESCONTO</span>
<div class="r" style="left:14px;top:95.7px;width:24px;height:0;border-top:1px dashed #6f7888"></div>
<svg style="left:43px;top:87px" width="16" height="16"><rect x="0.5" y="0.5" width="15" height="15" fill="none" stroke="#e8e8e8" stroke-width="1" stroke-dasharray="3 2" stroke-dashoffset="1.5"/><rect x="2.8" y="2.8" width="10.4" height="10.4" fill="none" stroke="#e8e8e8" stroke-width="1.1"/></svg>
<span class="t" style="left:63.0px;top:88.1px;transform:scaleX(0.8942);color:#f2f2f2;">1º PAVIMENTO (TÉRREO) - ÁREAS PASSÍVEIS DE DESCONTO</span>
<div class="r" style="left:14px;top:115.7px;width:24px;height:0;border-top:1px dashed #6f7888"></div>
<svg style="left:43px;top:107px" width="16" height="16"><rect x="0.5" y="0.5" width="15" height="15" fill="none" stroke="#e8e8e8" stroke-width="1" stroke-dasharray="3 2" stroke-dashoffset="1.5"/><rect x="2.8" y="2.8" width="10.4" height="10.4" fill="none" stroke="#e8e8e8" stroke-width="1.1"/></svg>
<span class="t" style="left:63.0px;top:108.1px;transform:scaleX(0.8942);color:#f2f2f2;">1º PAVIMENTO (TÉRREO) - ÁREAS PASSÍVEIS DE DESCONTO</span>
<div class="r" style="left:14px;top:135.7px;width:24px;height:0;border-top:1px dashed #6f7888"></div>
<svg style="left:43px;top:127px" width="16" height="16"><rect x="0.5" y="0.5" width="15" height="15" fill="none" stroke="#e8e8e8" stroke-width="1" stroke-dasharray="3 2" stroke-dashoffset="1.5"/><rect x="2.8" y="2.8" width="10.4" height="10.4" fill="none" stroke="#e8e8e8" stroke-width="1.1"/></svg>
<span class="t" style="left:63.0px;top:128.1px;transform:scaleX(0.8942);color:#f2f2f2;">1º PAVIMENTO (TÉRREO) - ÁREAS PASSÍVEIS DE DESCONTO</span>
<div class="r" style="left:14px;top:155.7px;width:24px;height:0;border-top:1px dashed #6f7888"></div>
<svg style="left:43px;top:147px" width="16" height="16"><rect x="0.5" y="0.5" width="15" height="15" fill="none" stroke="#e8e8e8" stroke-width="1" stroke-dasharray="3 2" stroke-dashoffset="1.5"/><rect x="2.8" y="2.8" width="10.4" height="10.4" fill="none" stroke="#e8e8e8" stroke-width="1.1"/></svg>
<span class="t" style="left:63.0px;top:148.1px;transform:scaleX(0.9150);color:#f2f2f2;">2º PAVIMENTO (PILOTIS) - ÁREA LAZER COMUM SOB PILOTIS</span>
<div class="r" style="left:14px;top:175.7px;width:24px;height:0;border-top:1px dashed #6f7888"></div>
<svg style="left:43px;top:167px" width="16" height="16"><rect x="0.5" y="0.5" width="15" height="15" fill="none" stroke="#e8e8e8" stroke-width="1" stroke-dasharray="3 2" stroke-dashoffset="1.5"/><rect x="2.8" y="2.8" width="10.4" height="10.4" fill="#8fd0ff" stroke="#e8e8e8" stroke-width="1.1"/></svg>
<span class="t" style="left:63.0px;top:168.1px;transform:scaleX(0.8995);color:#f2f2f2;">QUADRO DE ESQUADRIAS - JANELAS</span>
<div class="r" style="left:14px;top:195.7px;width:24px;height:0;border-top:1px dashed #6f7888"></div>
<svg style="left:43px;top:187px" width="16" height="16"><rect x="0.5" y="0.5" width="15" height="15" fill="none" stroke="#e8e8e8" stroke-width="1" stroke-dasharray="3 2" stroke-dashoffset="1.5"/><rect x="2.8" y="2.8" width="10.4" height="10.4" fill="#8fd0ff" stroke="#e8e8e8" stroke-width="1.1"/></svg>
<span class="t" style="left:63.0px;top:188.1px;transform:scaleX(0.9129);color:#f2f2f2;">QUADRO DE ESQUADRIAS - PANOS DE VIDRO</span>
<div class="r" style="left:14px;top:215.7px;width:24px;height:0;border-top:1px dashed #6f7888"></div>
<svg style="left:43px;top:207px" width="16" height="16"><rect x="0.5" y="0.5" width="15" height="15" fill="none" stroke="#e8e8e8" stroke-width="1" stroke-dasharray="3 2" stroke-dashoffset="1.5"/><rect x="2.8" y="2.8" width="10.4" height="10.4" fill="#8fd0ff" stroke="#e8e8e8" stroke-width="1.1"/></svg>
<span class="t" style="left:63.0px;top:208.1px;transform:scaleX(0.9050);color:#f2f2f2;">QUADRO DE ESQUADRIAS - PORTAS</span>
<div class="r" style="left:14px;top:235.7px;width:24px;height:0;border-top:1px dashed #6f7888"></div>
<svg style="left:43px;top:227px" width="16" height="16"><rect x="0.5" y="0.5" width="15" height="15" fill="none" stroke="#e8e8e8" stroke-width="1" stroke-dasharray="3 2" stroke-dashoffset="1.5"/><rect x="2.8" y="2.8" width="10.4" height="10.4" fill="none" stroke="#e8e8e8" stroke-width="1.1"/></svg>
<span class="t" style="left:63.0px;top:228.1px;transform:scaleX(0.8928);color:#f2f2f2;">VB_ÁREA CONSTRUÍDA COBERTA</span>
<div class="r" style="left:14px;top:255.7px;width:24px;height:0;border-top:1px dashed #6f7888"></div>
<svg style="left:43px;top:247px" width="16" height="16"><rect x="0.5" y="0.5" width="15" height="15" fill="none" stroke="#e8e8e8" stroke-width="1" stroke-dasharray="3 2" stroke-dashoffset="1.5"/><rect x="2.8" y="2.8" width="10.4" height="10.4" fill="none" stroke="#e8e8e8" stroke-width="1.1"/></svg>
<span class="t" style="left:63.0px;top:248.1px;transform:scaleX(0.9154);color:#f2f2f2;">VB_ÁREA PRIVATIVA TOTAL</span>
<div class="r" style="left:14px;top:275.7px;width:24px;height:0;border-top:1px dashed #6f7888"></div>
<svg style="left:43px;top:267px" width="16" height="16"><rect x="0.5" y="0.5" width="15" height="15" fill="none" stroke="#e8e8e8" stroke-width="1" stroke-dasharray="3 2" stroke-dashoffset="1.5"/><rect x="2.8" y="2.8" width="10.4" height="10.4" fill="none" stroke="#e8e8e8" stroke-width="1.1"/></svg>
<span class="t" style="left:63.0px;top:268.1px;transform:scaleX(0.8896);color:#f2f2f2;">VB_ÁREAS A DESCONTAR</span>
<div class="r" style="left:14px;top:295.7px;width:24px;height:0;border-top:1px dashed #6f7888"></div>
<svg style="left:43px;top:287px" width="16" height="16"><rect x="0.5" y="0.5" width="15" height="15" fill="none" stroke="#e8e8e8" stroke-width="1" stroke-dasharray="3 2" stroke-dashoffset="1.5"/><rect x="2.8" y="2.8" width="10.4" height="10.4" fill="none" stroke="#e8e8e8" stroke-width="1.1"/></svg>
<span class="t" style="left:63.0px;top:288.1px;transform:scaleX(0.8825);color:#f2f2f2;">VB_ÁREAS PASSÍVEIS DE DESCONTO (LIMITE DE 14%)</span>
<div class="r" style="left:14px;top:315.7px;width:24px;height:0;border-top:1px dashed #6f7888"></div>
<svg style="left:43px;top:307px" width="16" height="16"><rect x="0.5" y="0.5" width="15" height="15" fill="none" stroke="#e8e8e8" stroke-width="1" stroke-dasharray="3 2" stroke-dashoffset="1.5"/><rect x="2.8" y="2.8" width="10.4" height="10.4" fill="none" stroke="#e8e8e8" stroke-width="1.1"/></svg>
<span class="t" style="left:63.0px;top:308.1px;transform:scaleX(0.8818);color:#f2f2f2;">VB_ÁREAS PRIVATIVAS COBERTAS</span>
<div class="r" style="left:14px;top:335.7px;width:24px;height:0;border-top:1px dashed #6f7888"></div>
<svg style="left:43px;top:327px" width="16" height="16"><rect x="0.5" y="0.5" width="15" height="15" fill="none" stroke="#e8e8e8" stroke-width="1" stroke-dasharray="3 2" stroke-dashoffset="1.5"/><rect x="2.8" y="2.8" width="10.4" height="10.4" fill="none" stroke="#e8e8e8" stroke-width="1.1"/></svg>
<span class="t" style="left:63.0px;top:328.1px;transform:scaleX(0.8767);color:#f2f2f2;">VB_ÁREAS PRIVATIVAS DESCOBERTAS</span>
<div class="r" style="left:14px;top:355.7px;width:24px;height:0;border-top:1px dashed #6f7888"></div>
<svg style="left:43px;top:347px" width="16" height="16"><rect x="0.5" y="0.5" width="15" height="15" fill="none" stroke="#e8e8e8" stroke-width="1" stroke-dasharray="3 2" stroke-dashoffset="1.5"/><rect x="2.8" y="2.8" width="10.4" height="10.4" fill="none" stroke="#e8e8e8" stroke-width="1.1"/></svg>
<span class="t" style="left:63.0px;top:348.1px;transform:scaleX(0.9136);color:#f2f2f2;">ÁREA CONSTRUÍDA TOTAL</span>
</div>
<div class="r" style="left:10px;top:632px;width:8px;height:2px;background:#c9cdd3;"></div>
<svg style="left:26px;top:625px" width="17" height="16"><polygon points="0,5 6.5,5 8,1 11.5,0.5 16,10 16,13.5 13.5,15.5 0,15.5" fill="#e4e4e4"/><path d="M7.5 2L14 13" stroke="#3b4453" stroke-width="0.9"/><circle cx="13.3" cy="12.3" r="1.9" fill="none" stroke="#3b4453" stroke-width="0.9"/></svg>
<span class="t" style="left:47.0px;top:626.1px;transform:scaleX(0.9578);color:#f2f2f2;">Folhas (Prefixo de Folha)</span>
<div class="r" style="left:13px;top:643px;width:0;height:10px;border-left:1px dashed #6f7888"></div>
<div class="r" style="left:14px;top:653.7px;width:8px;height:0;border-top:1px dashed #6f7888"></div>
<div class="r" style="left:26px;top:652px;width:8px;height:2px;background:#c9cdd3;"></div>
<span class="t" style="left:43.0px;top:646.1px;transform:scaleX(0.7485);color:#f2f2f2;">E</span>
<div class="r" style="left:29px;top:663px;width:0;height:270px;border-left:1px dashed #6f7888"></div>
<div class="r" style="left:30px;top:673.7px;width:8px;height:0;border-top:1px dashed #6f7888"></div>
<div class="r" style="left:42px;top:672px;width:8px;height:2px;background:#c9cdd3;"></div><div class="r" style="left:45px;top:669px;width:2px;height:8px;background:#c9cdd3;"></div>
<span class="t" style="left:59.0px;top:666.1px;transform:scaleX(0.8996);color:#f2f2f2;">EX01 - TÉRREO F.TOURINHO</span>
<div class="r" style="left:30px;top:693.7px;width:8px;height:0;border-top:1px dashed #6f7888"></div>
<div class="r" style="left:42px;top:692px;width:8px;height:2px;background:#c9cdd3;"></div><div class="r" style="left:45px;top:689px;width:2px;height:8px;background:#c9cdd3;"></div>
<span class="t" style="left:59.0px;top:686.1px;transform:scaleX(0.9747);color:#f2f2f2;">EX02 - 2º Pavimento garagem</span>
<div class="r" style="left:30px;top:713.7px;width:8px;height:0;border-top:1px dashed #6f7888"></div>
<div class="r" style="left:42px;top:712px;width:8px;height:2px;background:#c9cdd3;"></div><div class="r" style="left:45px;top:709px;width:2px;height:8px;background:#c9cdd3;"></div>
<span class="t" style="left:59.0px;top:706.1px;transform:scaleX(0.9000);color:#f2f2f2;">EX03 - TÉRREO CONTORNO</span>
<div class="r" style="left:30px;top:733.7px;width:8px;height:0;border-top:1px dashed #6f7888"></div>
<div class="r" style="left:42px;top:732px;width:8px;height:2px;background:#c9cdd3;"></div><div class="r" style="left:45px;top:729px;width:2px;height:8px;background:#c9cdd3;"></div>
<span class="t" style="left:59.0px;top:726.1px;transform:scaleX(0.9657);color:#f2f2f2;">EX04 - 4º Pavimento</span>
<div class="r" style="left:30px;top:753.7px;width:8px;height:0;border-top:1px dashed #6f7888"></div>
<div class="r" style="left:42px;top:752px;width:8px;height:2px;background:#c9cdd3;"></div><div class="r" style="left:45px;top:749px;width:2px;height:8px;background:#c9cdd3;"></div>
<span class="t" style="left:59.0px;top:746.1px;transform:scaleX(0.9262);color:#f2f2f2;">EX05 - 5º PAVIMENTO PILOTIS</span>
<div class="r" style="left:30px;top:773.7px;width:8px;height:0;border-top:1px dashed #6f7888"></div>
<div class="r" style="left:42px;top:772px;width:8px;height:2px;background:#c9cdd3;"></div><div class="r" style="left:45px;top:769px;width:2px;height:8px;background:#c9cdd3;"></div>
<span class="t" style="left:59.0px;top:766.1px;transform:scaleX(0.9129);color:#f2f2f2;">EX08 - TIPO</span>
<div class="r" style="left:30px;top:793.7px;width:8px;height:0;border-top:1px dashed #6f7888"></div>
<div class="r" style="left:42px;top:792px;width:8px;height:2px;background:#c9cdd3;"></div><div class="r" style="left:45px;top:789px;width:2px;height:8px;background:#c9cdd3;"></div>
<span class="t" style="left:59.0px;top:786.1px;transform:scaleX(0.9696);color:#f2f2f2;">EX09 - Barrilete e Cobertura</span>
<div class="r" style="left:30px;top:813.7px;width:8px;height:0;border-top:1px dashed #6f7888"></div>
<div class="r" style="left:42px;top:812px;width:8px;height:2px;background:#c9cdd3;"></div><div class="r" style="left:45px;top:809px;width:2px;height:8px;background:#c9cdd3;"></div>
<span class="t" style="left:59.0px;top:806.1px;transform:scaleX(0.9115);color:#f2f2f2;">EX10 - ELEVA 01</span>
<div class="r" style="left:30px;top:833.7px;width:8px;height:0;border-top:1px dashed #6f7888"></div>
<div class="r" style="left:42px;top:832px;width:8px;height:2px;background:#c9cdd3;"></div><div class="r" style="left:45px;top:829px;width:2px;height:8px;background:#c9cdd3;"></div>
<span class="t" style="left:59.0px;top:826.1px;transform:scaleX(0.9203);color:#f2f2f2;">EX11 - ELEVA 02</span>
<div class="r" style="left:30px;top:853.7px;width:8px;height:0;border-top:1px dashed #6f7888"></div>
<div class="r" style="left:42px;top:852px;width:8px;height:2px;background:#c9cdd3;"></div><div class="r" style="left:45px;top:849px;width:2px;height:8px;background:#c9cdd3;"></div>
<span class="t" style="left:59.0px;top:846.1px;transform:scaleX(0.9115);color:#f2f2f2;">EX12 - ELEVA 03</span>
<div class="r" style="left:30px;top:873.7px;width:8px;height:0;border-top:1px dashed #6f7888"></div>
<div class="r" style="left:42px;top:872px;width:8px;height:2px;background:#c9cdd3;"></div><div class="r" style="left:45px;top:869px;width:2px;height:8px;background:#c9cdd3;"></div>
<span class="t" style="left:59.0px;top:866.1px;transform:scaleX(0.8800);color:#f2f2f2;">EX13 - ESTRUTURA</span>
<div class="r" style="left:30px;top:893.7px;width:8px;height:0;border-top:1px dashed #6f7888"></div>
<div class="r" style="left:42px;top:892px;width:8px;height:2px;background:#c9cdd3;"></div><div class="r" style="left:45px;top:889px;width:2px;height:8px;background:#c9cdd3;"></div>
<span class="t" style="left:59.0px;top:886.1px;transform:scaleX(0.8918);color:#f2f2f2;">EX14 - CORTES 3D</span>
<div class="r" style="left:30px;top:913.7px;width:8px;height:0;border-top:1px dashed #6f7888"></div>
<div class="r" style="left:42px;top:912px;width:8px;height:2px;background:#c9cdd3;"></div><div class="r" style="left:45px;top:909px;width:2px;height:8px;background:#c9cdd3;"></div>
<span class="t" style="left:59.0px;top:906.1px;transform:scaleX(0.8918);color:#f2f2f2;">EX15 - CORTES 2D</span>
<div class="r" style="left:5px;top:923px;width:362px;height:20px;background:#2e3546;"></div>
<div class="r" style="left:30px;top:933.7px;width:8px;height:0;border-top:1px dashed #6f7888"></div>
<div class="r" style="left:42px;top:932px;width:8px;height:2px;background:#c9cdd3;"></div><div class="r" style="left:45px;top:929px;width:2px;height:8px;background:#c9cdd3;"></div>
<span class="t" style="left:59.0px;top:926.1px;transform:scaleX(0.9996);color:#f2f2f2;font-weight:bold;">EX16 - 3d</span>
<div class="r" style="left:10px;top:952px;width:8px;height:2px;background:#c9cdd3;"></div><div class="r" style="left:13px;top:949px;width:2px;height:8px;background:#c9cdd3;"></div>
<svg style="left:26px;top:945px" width="16" height="16"><rect x="1" y="1" width="7" height="7" fill="#e4e4e4"/><polygon points="10,1 15,1 15,15 1,15 1,10 10,10" fill="#e4e4e4"/></svg>
<span class="t" style="left:47.0px;top:946.1px;transform:scaleX(0.9293);color:#f2f2f2;">Famílias</span>
<div class="r" style="left:10px;top:972px;width:8px;height:2px;background:#c9cdd3;"></div><div class="r" style="left:13px;top:969px;width:2px;height:8px;background:#c9cdd3;"></div>
<svg style="left:26px;top:965px" width="16" height="18"><path d="M3.5 0.5H0.5V17.5H3.5M12.5 0.5H15.5V17.5H12.5" fill="none" stroke="#e4e4e4" stroke-width="1.2"/><circle cx="6.5" cy="7" r="4" fill="#bfc3c9"/><rect x="6" y="8" width="7" height="7" fill="#e4e4e4"/></svg>
<span class="t" style="left:47.0px;top:966.1px;transform:scaleX(0.9732);color:#f2f2f2;">Grupos</span>
<svg style="left:26px;top:986px" width="16" height="14"><g fill="none" stroke="#e0a878" stroke-width="1.5" transform="rotate(-35 8 7)"><rect x="0" y="4.2" width="9" height="5.6" rx="2.8"/><rect x="7" y="4.2" width="9" height="5.6" rx="2.8"/></g></svg>
<span class="t" style="left:46.0px;top:986.1px;transform:scaleX(0.9764);color:#f2f2f2;">Vínculos do Revit</span>
<!-- sec_canvas -->
<div class="r" style="left:388px;top:178px;width:2px;height:826px;background:#525e74;"></div>
<div class="r" style="left:1552px;top:178px;width:2px;height:826px;background:#222933;"></div>
<div class="r" style="left:1554px;top:178px;width:2px;height:826px;background:#525e74;"></div>
<div class="r" style="left:390px;top:178px;width:1164px;height:21px;background:#475065;"></div>
<div class="r" style="left:390px;top:198px;width:1164px;height:2px;background:#222933;"></div>
<div class="r" style="left:390px;top:198px;width:2px;height:788px;background:#222933;"></div>
<svg style="left:396px;top:180px" width="17" height="16"><polygon points="0,8 8.5,0.5 17,8 14.5,8 14.5,15 2.5,15 2.5,8" fill="#9aa1ad"/><polygon points="8.5,0.5 17,8 8.5,4" fill="#7f8692"/><rect x="6" y="10" width="2.5" height="5" fill="#d9b24a"/></svg>
<span class="t" style="left:418.0px;top:180.8px;transform:scaleX(0.9352);color:#f2f2f2;">{3D}</span>
<div class="r" style="left:518px;top:178px;width:128px;height:21px;background:#222933;"></div>
<svg style="left:523px;top:182px" width="17" height="13"><polygon points="0,0 11,0 16.5,5.5 16.5,13 0,13" fill="#e3e3e3"/><path d="M11.5 0V5H16.5" fill="none" stroke="#222933" stroke-width="1"/></svg>
<span class="t" style="left:546.5px;top:180.8px;transform:scaleX(0.9904);color:#f2f2f2;font-weight:bold;">EX16 - 3d</span>
<svg style="left:630px;top:183px" width="11" height="11"><path d="M1 1L10 10M10 1L1 10" stroke="#d5d5d5" stroke-width="1.5"/></svg>
<svg style="left:1539.8px;top:184.8px" width="8.6" height="7.4"><rect x="0" y="0" width="8.6" height="1.4" fill="#b9bec9"/><polygon points="0,3 8.6,3 4.3,7.3" fill="#b9bec9"/></svg>
<div class="r" style="left:392px;top:200px;width:1144px;height:786px;background:#ffffff;"></div>
<div class="r" style="left:1535.5px;top:200px;width:16.5px;height:786px;background:#323a48;"></div>
<div class="r" style="left:1535.5px;top:216px;width:16.5px;height:1px;background:#465064;"></div>
<div class="r" style="left:1535.5px;top:968px;width:16.5px;height:1px;background:#465064;"></div>
<svg style="left:1538.7px;top:204px" width="10" height="7"><path d="M0.8 5.8L5 1.6L9.2 5.8" fill="none" stroke="#949cab" stroke-width="1.9"/></svg>
<svg style="left:1538.7px;top:973px" width="10" height="7"><path d="M0.8 1.2L5 5.4L9.2 1.2" fill="none" stroke="#949cab" stroke-width="1.9"/></svg>
<div class="r" style="left:1539.5px;top:583px;width:8px;height:20px;background:#7d8ba2;border-radius:4px"></div>
<div class="r" style="left:390px;top:986px;width:1162px;height:18px;background:#3b4453;"></div>
<div class="r" style="left:441px;top:986px;width:1095px;height:18px;background:#2c333f;"></div>
<div class="r" style="left:441px;top:986px;width:18px;height:18px;background:#353d4a;"></div>
<div class="r" style="left:1518px;top:986px;width:18px;height:18px;background:#353d4a;"></div>
<svg style="left:396px;top:990px" width="14" height="9"><g fill="none" stroke="#c9cdd3" stroke-width="1.3"><circle cx="3.5" cy="5.5" r="2.6"/><circle cx="10.5" cy="5.5" r="2.6"/><path d="M6 5Q7 3.8 8 5M1 4L2.5 0.8M13 4L11.5 0.8"/></g></svg>
<svg style="left:424px;top:988px" width="10" height="14"><circle cx="5" cy="5" r="4.3" fill="#66d3ee"/><rect x="3" y="9" width="4" height="3.5" fill="#f4f4f4"/></svg>
<svg style="left:446px;top:990px" width="7" height="10"><path d="M5.5 1L1.5 5L5.5 9" fill="none" stroke="#aab1bd" stroke-width="1.6"/></svg>
<svg style="left:1523px;top:990px" width="7" height="10"><path d="M1.5 1L5.5 5L1.5 9" fill="none" stroke="#aab1bd" stroke-width="1.6"/></svg>
<div class="r" style="left:980px;top:990px;width:18px;height:8px;background:#7d8ba2;border-radius:4px"></div>
<svg style="left:1541px;top:990px" width="9" height="9"><g fill="#8e97a6"><rect x="6" y="1" width="2" height="2"/><rect x="6" y="6" width="2" height="2"/><rect x="1" y="6" width="2" height="2"/></g></svg>
<!-- sec_scene -->
<svg style="left:392px;top:200px" width="1144" height="786" viewBox="392 200 1144 786">
<defs>
<pattern id="wood" width="5.05" height="10" patternUnits="userSpaceOnUse" patternTransform="translate(581.5,0)"><rect width="5.05" height="10" fill="#5c462b"/><rect width="2.5" height="10" fill="#c99a58"/><rect x="2.5" width="1.1" height="10" fill="#a07643"/></pattern>
<pattern id="woodDark" width="5.23" height="10" patternUnits="userSpaceOnUse" patternTransform="translate(838.7,0)"><rect width="5.23" height="10" fill="#4f3d27"/><rect width="1.7" height="10" fill="#c99a5a"/><rect x="1.7" width="0.7" height="10" fill="#7e5f3a"/></pattern>
<pattern id="wood3" width="5.5" height="10" patternUnits="userSpaceOnUse" patternTransform="translate(1173.8,0)"><rect width="5.5" height="10" fill="#57432a"/><rect width="2.7" height="10" fill="#c99a58"/><rect x="2.7" width="1.3" height="10" fill="#80603a"/></pattern>
<pattern id="wood2" width="2.9" height="40" patternUnits="userSpaceOnUse"><rect width="2.9" height="40" fill="#c9954f"/><rect x="1.6" width="1.3" height="40" fill="#7d5632"/></pattern>
<pattern id="zzD" width="7.2" height="8.4" patternUnits="userSpaceOnUse" patternTransform="translate(550.4,0) skewY(16)"><rect width="7.2" height="8.4" fill="#969696"/><rect y="5.3" width="7.2" height="2.5" fill="#bcbcbc"/><rect y="7.8" width="7.2" height="0.6" fill="#777"/><polyline points="0,4.4 1.8,1.6 3.6,4.4 5.4,1.6 7.2,4.4" fill="none" stroke="#0c0c0c" stroke-width="1.25"/></pattern>
<pattern id="zzL2" width="7.8" height="9.7" patternUnits="userSpaceOnUse" patternTransform="translate(913.5,3) skewY(-13)"><rect width="7.8" height="9.7" fill="#e5e5e2"/><rect y="6.4" width="7.8" height="2.1" fill="#d3d5cd"/><rect y="8.9" width="7.8" height="0.6" fill="#b0b0b0"/><polyline points="0,5.2 1.95,1.9 3.9,5.2 5.85,1.9 7.8,5.2" fill="none" stroke="#0c0c0c" stroke-width="1.3"/></pattern>
<pattern id="zzD3" width="7.2" height="8.1" patternUnits="userSpaceOnUse" patternTransform="translate(1141,0) skewY(25)"><rect width="7.2" height="8.1" fill="#969696"/><rect y="5.1" width="7.2" height="2.5" fill="#bcbcbc"/><rect y="7.6" width="7.2" height="0.5" fill="#777"/><polyline points="0,4.3 1.8,1.5 3.6,4.3 5.4,1.5 7.2,4.3" fill="none" stroke="#0c0c0c" stroke-width="1.25"/></pattern>
<pattern id="rail" width="2" height="4" patternUnits="userSpaceOnUse"><rect width="2" height="4" fill="#f1f1f1"/><rect width="0.8" height="4" fill="#b4ad98"/></pattern>
</defs>
<polygon points="426.5,578.9 596.8,368.5 777.4,401.4 612.3,614.6" fill="#5b7858" />
<polygon points="701.7,414.0 755.8,431.0 741.9,450.5 704.2,436.7" fill="#8d8d8d" />
<polyline points="690.3,412.5 705.4,411.9 720.5,410.9 743.2,410.0 759.5,411.3 770.2,410.3" fill="none" stroke="#111" stroke-width="1.8" />
<polygon points="704.2,436.7 741.9,449.0 733.1,460.6 722.4,470.7 708.0,468.2 695.4,465.6 699.1,450.5" fill="#f1f1f1" />
<polygon points="712.4,447.4 732.5,453.7 715.5,466.9 695.4,460.6" fill="#5b7858" />
<polyline points="692.2,462.5 704.2,465.6 708.0,470.7 715.5,473.2 721.8,475.7" fill="none" stroke="#111" stroke-width="1.8" />
<polyline points="695.4,483.9 705.4,482.0 715.5,483.3" fill="none" stroke="#111" stroke-width="1.8" />
<polygon points="426.5,578.9 452.5,546.5 648.0,566.0 612.3,614.6" fill="#8d8d8d" />
<polygon points="452.2,543.1 484.3,546.7 486.7,550.9 450.5,547.1" fill="#f1f1f1" />
<polygon points="610.1,564.0 646.7,570.1 643.3,575.5 607.4,568.7" fill="#f1f1f1" />
<polygon points="435.0,568.0 440.0,562.0 500.0,574.0 496.0,580.0" fill="#5b7858" />
<polygon points="515.0,583.0 520.0,577.0 628.0,597.0 623.0,604.0" fill="#5b7858" />
<polygon points="570.0,608.0 612.3,614.6 608.0,620.0 585.0,613.0" fill="#5b7858" />
<polygon points="612.3,614.6 777.4,401.4 777.4,417.8 611.5,655.3" fill="#7b7b7b" />
<polygon points="426.5,578.9 612.3,614.6 611.5,655.3 426.1,621.0" fill="#2e2e2e" />
<polyline points="536.9,438.9 547.6,441.4" fill="none" stroke="#111" stroke-width="1.7" />
<polyline points="521.3,458.7 533.6,461.2 547.6,463.6" fill="none" stroke="#111" stroke-width="1.7" />
<polyline points="507.3,476.0 523.8,478.4 540.2,480.1" fill="none" stroke="#111" stroke-width="1.7" />
<polyline points="493.3,492.4 507.3,494.4 522.1,495.7" fill="none" stroke="#111" stroke-width="1.7" />
<polyline points="475.2,516.3 490.8,519.1 509.0,521.2" fill="none" stroke="#111" stroke-width="1.7" />
<polyline points="457.1,539.3 471.1,541.5 484.3,542.6" fill="none" stroke="#111" stroke-width="1.7" />
<polyline points="440.0,561.0 500.0,572.0 520.0,583.0 560.0,590.0 585.0,596.0 617.0,610.0" fill="none" stroke="#111" stroke-width="1.3" />
<polyline points="665.7,496.2 679.2,500.3 695.5,503.0 701.6,501.0" fill="none" stroke="#111" stroke-width="1.8" />
<polyline points="652.1,509.8 660.3,517.2 669.7,518.6 686.0,520.6" fill="none" stroke="#111" stroke-width="1.8" />
<polyline points="626.4,518.6 629.8,526.7 649.4,531.5 672.5,536.2" fill="none" stroke="#111" stroke-width="1.8" />
<polyline points="620.3,551.1 635.9,554.5 653.5,559.9" fill="none" stroke="#111" stroke-width="1.8" />
<polyline points="591.2,540.3 595.2,533.5 606.1,524.7 610.1,522.6" fill="none" stroke="#111" stroke-width="1.6" />
<polygon points="617.6,502.3 654.8,475.2 673.8,463.0 695.5,452.9 696.8,460.3 696.8,467.1 687.4,467.1 671.1,479.3 657.5,479.3 639.9,490.8 641.3,494.9 624.4,507.1 611.5,504.8 593.9,517.2 581.7,524.0 581.7,515.9 616.9,494.2" fill="#f1f1f1" />
<polygon points="616.9,498.9 653.5,471.8 654.8,475.5 617.6,502.6" fill="#5e5e5e" />
<polygon points="653.5,471.8 700.9,441.4 700.9,448.1 673.8,463.3 654.8,475.5" fill="#d5d9d2" />
<polygon points="653.5,469.1 700.9,438.6 700.9,441.6 653.5,472.2" fill="#4c4c4c" />
<polygon points="660.9,501.6 676.5,486.1 690.1,486.1 707.0,473.9 709.0,476.6 690.1,489.5 679.2,488.8 663.0,503.7" fill="#ececec" />
<polygon points="572.9,534.8 580.3,526.7 592.5,521.3 606.1,523.3 604.7,526.7 593.2,524.7 583.7,529.4 577.6,536.9" fill="#ededed" />
<polygon points="604.7,544.3 610.1,528.1 625.0,521.3 633.2,518.6 635.9,521.3 625.0,524.7 614.2,530.8 609.5,545.7" fill="#ededed" />
<polygon points="593.9,517.2 611.5,504.8 630.5,511.8 611.5,525.4" fill="#4f5a34" />
<polygon points="624.4,507.1 641.3,494.9 660.9,501.6 644.0,513.8" fill="#4f5a34" />
<polygon points="639.9,490.8 657.5,479.3 676.5,486.1 660.3,497.6" fill="#4f5a34" />
<polygon points="671.1,479.3 687.4,467.1 707.0,473.9 690.1,486.1" fill="#4f5a34" />
<polygon points="611.5,525.4 630.5,511.8 630.5,515.9 611.5,528.7" fill="#8a8a8a" />
<polygon points="660.3,497.6 676.5,486.1 676.5,487.7 660.3,499.6" fill="#777" />
<polygon points="690.1,486.1 707.0,473.9 707.0,477.3 690.1,488.8" fill="#5a4a40" />
<polygon points="527.1,485.8 509.0,527.0 513.1,527.8 528.7,489.1" fill="#f3f3f3" />
<polygon points="527.1,505.6 541.0,495.7 548.5,502.3 561.6,505.6 561.6,523.7 573.1,527.0 553.4,533.6 513.9,533.6" fill="#4f5a34" />
<polygon points="532.0,502.3 543.5,495.7 548.5,505.6 551.7,518.8 543.5,533.6 530.3,533.6 536.9,518.8 532.0,505.6" fill="#e3e3e3" />
<polygon points="527.1,485.8 541.0,476.0 547.6,474.3 547.6,500.7 541.0,495.7 527.1,505.6" fill="#818181" />
<polygon points="541.0,476.0 547.6,474.3 547.6,500.7 541.0,495.7" fill="#5c5c5c" />
<polyline points="527.1,485.8 541.0,476.0 547.6,474.0" fill="none" stroke="#f5f5f5" stroke-width="1.2" />
<polygon points="656.6,398.3 701.7,417.8 704.8,420.3 656.6,448.5" fill="#f1f1f1" />
<polyline points="657.0,398.3 677.8,404.6 701.7,414.0" fill="none" stroke="#8d8d8d" stroke-width="1.6" />
<polygon points="656.6,448.0 704.8,420.3 704.8,429.1 656.6,458.0" fill="#f5f5f5" />
<polygon points="657.0,444.6 701.7,418.6 701.7,421.6 657.0,447.8" fill="url(#rail)" />
<polygon points="651.6,460.0 657.0,457.5 704.8,429.1 704.8,438.0 651.6,467.6" fill="url(#wood2)" />
<polygon points="656.4,469.4 702.9,440.5 702.9,443.6 658.9,471.9" fill="#4d4d4d" />
<polygon points="658.9,471.9 702.9,443.6 702.9,450.5 695.4,458.1 677.8,463.1 658.9,474.4" fill="#d9dcd6" />
<polygon points="674.0,462.5 686.6,455.6 686.6,460.6 674.0,467.5" fill="#555" />
<polyline points="682.8,469.4 687.8,467.5 696.6,470.0" fill="none" stroke="#e0541e" stroke-width="1.6" />
<polygon points="547.2,332.3 579.7,341.6 577.3,510.9 548.4,499.6" fill="#e6e6e6" />
<polygon points="550.4,338.0 576.4,346.0 576.0,505.0 551.0,496.0" fill="url(#zzD)" />
<polygon points="547.2,332.3 548.8,333.0 549.8,499.6 548.4,499.6" fill="#9a9a9a" />
<polygon points="576.4,341.0 581.7,341.2 581.0,512.0 577.0,511.0" fill="#ececec" />
<polygon points="581.7,341.2 652.0,289.4 651.6,464.3 653.5,471.8 635.9,484.7 616.9,498.9 616.9,486.7 614.2,486.7 581.7,505.7" fill="url(#wood)" />
<polygon points="652.0,289.4 655.8,286.5 656.6,463.0 651.6,464.3" fill="#f2f2f2" />
<polygon points="561.6,505.6 576.4,509.7 576.4,527.0 561.6,523.7" fill="#c9cec6" />
<polygon points="581.7,511.8 616.2,489.5 616.2,502.3 592.5,517.2 581.7,522.6" fill="#6c6c6c" />
<polygon points="581.7,513.2 592.5,506.4 592.5,517.2 581.7,522.6" fill="#dfe3dc" />
<polygon points="577.6,510.5 616.2,486.7 616.2,489.9 581.7,511.8 581.7,522.6 577.6,523.3" fill="#f4f4f4" />
<polygon points="547.2,332.3 625.2,275.4 655.8,286.5 579.7,341.6" fill="#e9e9e9" stroke="#c4c4c4" stroke-width="0.8"/>
<polyline points="552.0,332.0 624.5,279.0 650.0,288.0 580.0,338.5" fill="none" stroke="#bdbdbd" stroke-width="0.8" />
<polyline points="627.0,281.0 649.0,289.5" fill="none" stroke="#555" stroke-width="1" />
<polyline points="622.0,284.0 626.0,286.5 630.0,284.0" fill="none" stroke="#888" stroke-width="0.8" />
<polyline points="631.0,288.0 636.0,290.5 640.0,288.0" fill="none" stroke="#888" stroke-width="0.8" />
<polyline points="622.0,291.0 630.0,294.5 636.0,295.5" fill="none" stroke="#999" stroke-width="0.8" />
<polygon points="565.2,306.4 601.0,280.6 618.5,287.8 584.2,314.1" fill="#dedede" />
<polygon points="565.2,306.4 584.2,314.1 584.2,323.8 565.2,318.0" fill="#2f2f2f" />
<polygon points="584.2,314.1 618.5,287.8 618.5,298.7 584.2,323.8" fill="#5b5a58" />
<circle cx="576" cy="304.3" r="0.8" fill="#222"/>
<polygon points="483.0,537.7 487.5,536.2 492.0,530.4 496.5,530.4 501.0,527.0 505.5,529.1 510.0,527.9 514.5,530.5 519.0,531.0 523.5,535.1 528.0,537.7 531.9,542.4 526.0,547.1 531.6,551.7 526.7,556.3 531.0,561.0 528.0,563.5 523.5,570.5 519.0,562.5 514.5,569.6 510.0,562.5 505.5,567.6 501.0,562.5 496.5,568.7 492.0,562.9 487.5,569.3 483.0,563.4 480.5,561.0 484.2,556.3 480.4,551.7 483.5,547.1 480.2,542.4" fill="#323232" stroke="#323232" stroke-width="1.5" stroke-linejoin="round"/><polygon points="503.0,531.0 503.0,573.6 496.0,578.1 493.0,577.6 495.5,548.2 499.0,534.7" fill="#8c8c8c" /><polygon points="499.0,530.0 503.0,523.5 505.5,527.0 508.0,524.0 509.0,529.0 503.0,532.0" fill="#8f8f8f" /><rect x="503.1" y="532.0" width="1.8" height="43.6" fill="#323232"/>
<polygon points="512.0,542.2 516.6,538.5 521.2,533.6 525.8,534.1 530.4,530.9 535.0,531.9 539.6,530.1 544.2,533.8 548.8,534.1 553.4,538.4 558.0,541.9 561.3,546.2 555.8,551.1 561.5,555.9 556.5,560.8 560.9,565.6 558.0,569.1 553.4,575.2 548.8,568.6 544.2,572.9 539.6,567.3 535.0,572.5 530.4,567.1 525.8,572.6 521.2,567.4 516.6,574.7 512.0,567.5 508.1,565.6 513.5,560.8 509.7,555.9 512.7,551.1 508.7,546.2" fill="#323232" stroke="#323232" stroke-width="1.5" stroke-linejoin="round"/><polygon points="532.6,534.0 532.6,578.5 525.6,583.0 522.6,582.5 525.1,552.3 528.6,538.1" fill="#8c8c8c" /><polygon points="528.6,533.0 532.6,526.5 535.1,530.0 537.6,527.0 538.6,532.0 532.6,535.0" fill="#8f8f8f" /><rect x="532.7" y="535.0" width="1.8" height="45.5" fill="#323232"/>
<polygon points="541.0,543.4 545.7,540.4 550.4,536.2 555.1,535.9 559.8,531.9 564.5,534.5 569.2,532.0 573.9,535.3 578.6,534.8 583.3,540.9 588.0,544.5 591.7,548.4 585.7,553.3 590.1,558.2 585.6,563.2 591.0,568.1 588.0,570.9 583.3,577.6 578.6,571.4 573.9,577.0 569.2,571.8 564.5,575.0 559.8,575.0 555.1,575.4 550.4,572.0 545.7,575.2 541.0,572.1 537.2,568.1 542.3,563.2 537.7,558.2 542.4,553.3 537.7,548.4" fill="#323232" stroke="#323232" stroke-width="1.5" stroke-linejoin="round"/><polygon points="561.4,536.0 561.4,581.0 554.4,585.5 551.4,585.0 553.9,554.5 557.4,540.2" fill="#8c8c8c" /><polygon points="557.4,535.0 561.4,528.5 563.9,532.0 566.4,529.0 567.4,534.0 561.4,537.0" fill="#8f8f8f" /><rect x="561.5" y="537.0" width="1.8" height="46.0" fill="#323232"/>
<polygon points="570.0,550.8 574.9,547.6 579.8,544.1 584.7,543.1 589.6,539.9 594.5,543.1 599.4,540.5 604.3,542.7 609.2,542.9 614.1,549.1 619.0,550.4 621.4,554.4 617.0,558.7 622.0,563.0 616.6,567.4 621.8,571.7 619.0,573.5 614.1,578.2 609.2,575.3 604.3,578.7 599.4,573.2 594.5,578.0 589.6,573.8 584.7,579.0 579.8,573.6 574.9,580.7 570.0,573.7 566.5,571.7 570.9,567.4 567.8,563.0 571.5,558.7 566.7,554.4" fill="#323232" stroke="#323232" stroke-width="1.5" stroke-linejoin="round"/><polygon points="593.5,544.0 593.5,584.0 586.5,588.5 583.5,588.0 586.0,559.8 589.5,547.2" fill="#8c8c8c" /><polygon points="589.5,543.0 593.5,536.5 596.0,540.0 598.5,537.0 599.5,542.0 593.5,545.0" fill="#8f8f8f" /><rect x="593.6" y="545.0" width="1.8" height="41.0" fill="#323232"/>
<path d="M717.5 452V441" stroke="#444" stroke-width="0.9" fill="none"/><path d="M714.0 441.5L717.5 440L721.0 441.5M714.5 437.5L717.5 440L720.5 437.5M713.5 439.5H721.5" stroke="#3a3a3a" stroke-width="0.9" fill="none"/><ellipse cx="718.0" cy="452.8" rx="3" ry="1.2" fill="#a9a9a9"/>
<path d="M704 462V451" stroke="#444" stroke-width="0.9" fill="none"/><path d="M700.5 451.5L704 450L707.5 451.5M701 447.5L704 450L707 447.5M700 449.5H708" stroke="#3a3a3a" stroke-width="0.9" fill="none"/><ellipse cx="704.5" cy="462.8" rx="3" ry="1.2" fill="#a9a9a9"/>
<path d="M692 470V459" stroke="#444" stroke-width="0.9" fill="none"/><path d="M688.5 459.5L692 458L695.5 459.5M689 455.5L692 458L695 455.5M688 457.5H696" stroke="#3a3a3a" stroke-width="0.9" fill="none"/><ellipse cx="692.5" cy="470.8" rx="3" ry="1.2" fill="#a9a9a9"/>
<path d="M663 478V467" stroke="#444" stroke-width="0.9" fill="none"/><path d="M659.5 467.5L663 466L666.5 467.5M660 463.5L663 466L666 463.5M659 465.5H667" stroke="#3a3a3a" stroke-width="0.9" fill="none"/><ellipse cx="663.5" cy="478.8" rx="3" ry="1.2" fill="#a9a9a9"/>
<path d="M650 492V481" stroke="#444" stroke-width="0.9" fill="none"/><path d="M646.5 481.5L650 480L653.5 481.5M647 477.5L650 480L653 477.5M646 479.5H654" stroke="#3a3a3a" stroke-width="0.9" fill="none"/><ellipse cx="650.5" cy="492.8" rx="3" ry="1.2" fill="#a9a9a9"/>
<polygon points="992.6,610.6 1249.5,352.9 1401.0,411.1 1167.6,659.0 1100.3,642.8" fill="#5b7858" />
<polygon points="1249.2,352.4 1401.0,411.1 1366.7,447.7 1262.2,423.8 1249.9,422.2" fill="#8d8d8d" />
<polygon points="1262.2,394.2 1294.3,402.4 1322.3,410.6 1390.6,422.2 1384.8,428.7 1338.7,419.7 1314.1,413.9 1289.4,406.0 1262.2,398.8" fill="#5b7858" />
<polyline points="1262.2,390.9 1294.3,400.8 1314.1,413.9 1338.7,419.7 1382.4,431.2" fill="none" stroke="#111" stroke-width="1.5" />
<polygon points="1262.2,423.8 1366.7,447.7 1361.0,454.3 1262.2,434.0" fill="#f1f1f1" />
<polyline points="1262.2,434.8 1297.6,443.6" fill="none" stroke="#222" stroke-width="1.3" />
<polyline points="1309.1,446.0 1357.7,458.4" fill="none" stroke="#111" stroke-width="1.6" />
<polyline points="1290.2,474.8 1331.3,484.7" fill="none" stroke="#111" stroke-width="1.6" />
<polygon points="1262.2,441.9 1277.0,444.9 1256.5,475.7 1246.6,469.9 1262.2,453.4" fill="#4f5a34" />
<polygon points="1294.3,447.2 1306.7,433.4 1312.4,443.9 1277.0,501.2 1264.7,501.2 1275.4,472.4" fill="#efefef" />
<polygon points="1277.0,444.9 1294.3,447.2 1275.4,472.4 1256.5,475.7" fill="#f6f6f6" stroke="#b8b49c" stroke-width="0.6"/>
<polyline points="1290.0,475.0 1311.0,479.0 1332.0,485.0" fill="none" stroke="#111" stroke-width="1.5" />
<polyline points="1260.0,504.0 1282.5,507.0 1305.0,512.0" fill="none" stroke="#111" stroke-width="1.5" />
<polyline points="1231.0,522.0 1258.0,527.0 1285.0,534.0" fill="none" stroke="#111" stroke-width="1.5" />
<polyline points="1201.0,540.0 1233.0,547.0 1265.0,556.0" fill="none" stroke="#111" stroke-width="1.5" />
<polyline points="1172.0,559.0 1207.0,569.0 1242.0,581.0" fill="none" stroke="#111" stroke-width="1.5" />
<polyline points="1143.0,577.0 1180.5,590.0 1218.0,605.0" fill="none" stroke="#111" stroke-width="1.5" />
<polyline points="1120.0,594.0 1158.0,611.0 1196.0,630.0" fill="none" stroke="#111" stroke-width="1.5" />
<polygon points="1040.5,563.4 1081.6,528.3 1130.0,585.2 1117.9,594.9 1084.1,582.8 1052.6,570.7" fill="#f1f1f1" />
<polygon points="1053.8,557.4 1076.8,546.5 1090.1,555.0 1067.1,565.8" fill="#5b7858" />
<polygon points="1023.6,582.8 1040.5,563.4 1084.1,582.8 1115.5,594.9 1134.9,607.0 1139.7,619.1 1134.9,633.6 1125.2,638.5 1100.3,642.8 1110.7,623.9 1105.8,609.4 1076.8,597.3" fill="#8d8d8d" />
<polygon points="1084.1,582.8 1117.9,594.9 1144.6,607.0 1151.8,623.9 1149.4,633.6 1190.6,640.9 1178.5,649.3 1130.0,640.9 1139.7,619.1 1134.9,607.0 1115.5,594.9" fill="#f1f1f1" />
<polygon points="1100.3,642.8 1125.2,638.5 1178.5,649.3 1167.6,659.0" fill="#9b9b9b" />
<polyline points="1001.8,600.9 1040.5,605.8 1096.2,607.0 1110.7,604.6 1125.2,599.7" fill="none" stroke="#111" stroke-width="1.5" />
<polyline points="1122.8,475.1 1138.5,478.7" fill="none" stroke="#111" stroke-width="1.8" />
<polyline points="1101.0,498.1 1110.7,496.9 1121.6,500.5" fill="none" stroke="#111" stroke-width="1.8" />
<polyline points="1080.4,521.1 1087.7,519.9" fill="none" stroke="#111" stroke-width="1.6" />
<polyline points="1069.5,534.4 1079.2,535.6" fill="none" stroke="#111" stroke-width="1.6" />
<polygon points="1401.0,411.1 1401.0,452.6 1167.6,676.0 1167.6,659.0" fill="#7b7b7b" />
<polygon points="992.6,610.6 1100.3,642.8 1100.3,658.5 992.6,626.8" fill="#2e2e2e" />
<polygon points="1084.1,522.3 1139.7,495.2 1163.9,505.3 1246.2,471.5 1258.3,479.9 1130.0,547.7" fill="#efefef" />
<polygon points="1084.5,521.1 1139.7,494.2 1139.7,496.1 1085.5,523.3" fill="#9a9d90" />
<polygon points="1085.5,523.3 1130.0,546.5 1257.8,480.2 1258.3,482.6 1130.0,549.4 1084.5,525.2" fill="url(#rail)" />
<polygon points="1130.0,549.4 1258.3,482.6 1277.7,473.9 1277.7,492.0 1130.0,584.0" fill="#e2e2e2" />
<polygon points="1130.0,549.4 1258.3,482.6 1258.3,485.5 1130.0,552.5" fill="#f5f5f5" />
<polygon points="1080.4,527.1 1130.0,549.4 1130.0,575.5 1084.1,550.1" fill="#4a4a4a" />
<polygon points="1080.4,525.2 1130.0,547.7 1130.0,552.5 1080.4,530.0" fill="#f2f2f2" />
<polygon points="1082.9,534.4 1125.2,555.0 1125.2,569.5 1084.5,546.5" fill="url(#wood2)" />
<polygon points="1088.9,553.7 1130.0,575.5 1130.0,584.0 1093.7,562.2" fill="#d5d8d2" />
<polyline points="1165.1,548.9 1212.3,524.7" fill="none" stroke="#bdbdbd" stroke-width="0.8" />
<polygon points="1139.0,327.6 1166.3,340.2 1166.3,506.0 1139.7,492.7" fill="#dedede" />
<polygon points="1141.0,333.0 1164.0,344.0 1164.0,500.0 1141.5,489.0" fill="url(#zzD3)" />
<polygon points="1166.3,340.2 1171.2,339.0 1171.2,508.0 1166.3,506.0" fill="#eeeeee" />
<polygon points="1141.0,489.0 1166.3,501.0 1166.3,506.0 1152.0,500.0 1141.0,494.0" fill="#cfd2cc" />
<polygon points="1171.2,339.0 1194.2,326.1 1195.4,491.4 1171.2,497.0" fill="url(#wood3)" />
<polygon points="1240.2,300.3 1255.9,293.0 1255.9,456.3 1240.2,463.6" fill="url(#wood3)" />
<polygon points="1255.9,293.0 1261.2,288.2 1261.2,451.5 1255.9,456.3" fill="#f0f0f0" />
<polygon points="1195.4,316.0 1240.2,293.0 1240.2,463.6 1195.4,491.4" fill="#595856" />
<polygon points="1166.4,506.0 1171.2,503.5 1171.2,493.9 1194.2,498.7 1194.2,491.4 1240.2,463.6 1240.2,470.9 1246.2,474.5 1193.0,509.6 1163.9,514.4" fill="#f0f0f0" />
<polygon points="1139.0,327.6 1235.3,276.0 1261.2,288.2 1166.3,340.2" fill="#ebebeb" stroke="#c0c0c0" stroke-width="0.8"/>
<polygon points="1179.7,308.7 1224.4,286.9 1240.2,293.0 1195.4,316.0" fill="#e6e6e6" stroke="#bbb" stroke-width="0.6"/>
<polygon points="1179.7,308.7 1195.4,316.0 1195.4,325.7 1179.7,318.4" fill="#222" />
<polyline points="1232.0,279.0 1256.0,290.0" fill="none" stroke="#444" stroke-width="1" />
<circle cx="1228" cy="293" r="1" fill="#222"/>
<polygon points="1164.0,308.0 1175.0,310.0 1173.5,315.0 1162.5,313.0" fill="#6f7389" stroke="#555a70" stroke-width="0.5"/>
<polygon points="1154.0,315.0 1165.0,317.0 1163.5,322.0 1152.5,320.0" fill="#6f7389" stroke="#555a70" stroke-width="0.5"/>
<polygon points="1172.0,314.0 1183.0,316.0 1181.5,321.0 1170.5,319.0" fill="#6f7389" stroke="#555a70" stroke-width="0.5"/>
<polygon points="1166.0,322.0 1177.0,324.0 1175.5,329.0 1164.5,327.0" fill="#6f7389" stroke="#555a70" stroke-width="0.5"/>
<polygon points="1263.0,359.2 1266.0,358.3 1268.9,353.4 1271.8,353.1 1274.8,349.9 1277.7,351.2 1280.6,350.5 1283.5,352.4 1286.5,352.9 1289.4,358.0 1292.3,359.2 1294.5,364.6 1290.0,369.2 1295.5,373.8 1290.3,378.3 1295.5,382.9 1292.3,386.3 1289.4,391.1 1286.5,386.4 1283.5,390.6 1280.6,384.3 1277.7,389.5 1274.8,386.5 1271.8,390.4 1268.9,389.5 1266.0,389.5 1263.0,385.4 1259.5,382.9 1264.5,378.3 1260.5,373.8 1263.7,369.2 1260.2,364.6" fill="#323232" stroke="#323232" stroke-width="1.5" stroke-linejoin="round"/><polygon points="1265.3,353.4 1265.3,395.5 1258.3,400.0 1255.3,399.5 1257.8,370.4 1261.3,357.0" fill="#8c8c8c" /><polygon points="1261.3,352.4 1265.3,345.9 1267.8,349.4 1270.3,346.4 1271.3,351.4 1265.3,354.4" fill="#8f8f8f" /><rect x="1265.4" y="354.4" width="1.8" height="43.1" fill="#323232"/>
<polygon points="1282.0,364.9 1285.8,362.9 1289.7,358.1 1293.6,358.8 1297.4,355.9 1301.3,357.1 1305.2,354.5 1309.0,359.2 1312.9,358.2 1316.8,364.4 1320.6,366.3 1322.7,370.4 1318.5,375.2 1324.3,379.9 1318.8,384.6 1323.6,389.3 1320.6,391.0 1316.8,398.0 1312.9,391.8 1309.0,397.5 1305.2,393.5 1301.3,398.0 1297.4,392.9 1293.6,396.1 1289.7,393.2 1285.8,398.2 1282.0,391.0 1279.7,389.3 1283.0,384.6 1279.4,379.9 1283.2,375.2 1279.5,370.4" fill="#323232" stroke="#323232" stroke-width="1.5" stroke-linejoin="round"/><polygon points="1293.3,358.7 1293.3,402.1 1286.3,406.6 1283.3,406.1 1285.8,376.3 1289.3,362.6" fill="#8c8c8c" /><polygon points="1289.3,357.7 1293.3,351.2 1295.8,354.7 1298.3,351.7 1299.3,356.7 1293.3,359.7" fill="#8f8f8f" /><rect x="1293.4" y="359.7" width="1.8" height="44.4" fill="#323232"/>
<polygon points="1309.1,371.8 1312.7,370.4 1316.4,363.8 1320.0,363.6 1323.6,360.1 1327.2,362.5 1330.8,360.8 1334.5,363.8 1338.1,363.8 1341.7,369.3 1345.3,371.6 1347.7,376.5 1344.8,381.4 1347.5,386.2 1343.2,391.0 1348.1,395.8 1345.3,398.6 1341.7,403.1 1338.1,398.7 1334.5,403.8 1330.8,397.6 1327.2,404.5 1323.6,402.6 1320.0,402.6 1316.4,398.0 1312.7,404.8 1309.1,398.0 1306.6,395.8 1311.5,391.0 1307.0,386.2 1311.6,381.4 1305.8,376.5" fill="#323232" stroke="#323232" stroke-width="1.5" stroke-linejoin="round"/><polygon points="1321.3,364.4 1321.3,408.6 1314.3,413.1 1311.3,412.6 1313.8,382.6 1317.3,368.5" fill="#8c8c8c" /><polygon points="1317.3,363.4 1321.3,356.9 1323.8,360.4 1326.3,357.4 1327.3,362.4 1321.3,365.4" fill="#8f8f8f" /><rect x="1321.4" y="365.4" width="1.8" height="45.2" fill="#323232"/>
<polygon points="1262.2,402.6 1263.3,403.3 1264.4,399.9 1265.4,401.6 1266.5,397.5 1267.6,400.2 1268.6,398.3 1269.7,401.9 1270.8,400.0 1271.8,403.5 1272.9,401.3 1275.1,403.8 1271.9,405.5 1276.1,407.2 1271.6,408.8 1276.1,410.5 1272.9,410.1 1271.8,416.5 1270.8,411.1 1269.7,414.4 1268.6,410.7 1267.6,414.2 1266.5,414.2 1265.4,414.2 1264.4,414.2 1263.3,414.2 1262.2,414.2 1259.9,410.5 1262.9,408.8 1258.4,407.2 1263.0,405.5 1260.1,403.8" fill="#323232" stroke="#323232" stroke-width="1.5" stroke-linejoin="round"/><rect x="1263.8" y="403.3" width="1.8" height="18.9" fill="#323232"/>
<path d="M1070 556V543" stroke="#444" stroke-width="0.9" fill="none"/><path d="M1066.5 543.5L1070 542L1073.5 543.5M1067 539.5L1070 542L1073 539.5M1066 541.5H1074" stroke="#3a3a3a" stroke-width="0.9" fill="none"/><ellipse cx="1070.5" cy="556.8" rx="3" ry="1.2" fill="#a9a9a9"/>
<polygon points="659.5,615.3 786.4,547.7 1154.4,711.1 1111.1,737.8 1031.1,779.2" fill="#5b7858" />
<polygon points="659.4,615.2 786.4,547.7 834.4,568.7 834.4,577.5 729.1,644.3" fill="#8d8d8d" />
<polygon points="660.1,614.6 694.2,596.6 698.6,598.5 663.7,616.7" fill="#5b7858" />
<polygon points="691.3,629.7 803.1,554.9 816.2,560.8 702.9,635.6" fill="#5b7858" />
<polygon points="729.1,644.3 834.4,576.7 834.4,592.0 743.6,649.4" fill="#f1f1f1" />
<polyline points="669.5,618.8 713.1,608.0 736.3,596.3 778.5,583.3 816.2,560.8" fill="none" stroke="#111" stroke-width="1.4" />
<polyline points="713.1,638.5 756.7,626.8 793.0,616.7 826.4,597.8 834.4,594.2" fill="none" stroke="#111" stroke-width="1.4" />
<polygon points="780.0,632.3 802.7,617.5 837.5,637.5 832.3,648.0 804.4,637.5" fill="#f1f1f1" />
<polygon points="783.5,632.3 802.7,621.0 832.3,638.4 828.8,645.4 804.4,634.9" fill="#5b7858" />
<polygon points="799.2,619.2 814.9,612.2 837.5,623.6 837.5,637.5" fill="#4f5a34" />
<polygon points="793.9,621.8 800.9,618.7 839.3,638.4 835.8,642.7" fill="#7d8274" />
<polyline points="780.0,647.1 790.5,638.4 807.9,636.6 823.6,640.1 834.0,646.2" fill="none" stroke="#111" stroke-width="1.5" />
<polygon points="821.8,589.6 832.3,593.1 832.3,606.1 825.3,602.7" fill="#5b7858" />
<polygon points="813.1,611.4 832.3,604.4 837.5,621.8 832.3,620.1" fill="#f1f1f1" />
<polygon points="1127.7,701.0 1154.4,711.1 1111.1,737.8 1106.5,732.2 1087.2,724.9 1068.8,723.0 1050.4,726.7 1070.6,734.1 986.0,758.9 954.7,747.0 1000.7,734.1 1043.0,724.0 1068.8,718.4 1092.7,717.5 1116.6,724.9" fill="#8d8d8d" />
<polygon points="1013.6,708.3 1026.5,720.3 1039.4,717.5 1068.8,712.9 1106.5,713.8 1116.6,698.2 1127.7,701.0 1116.6,724.9 1092.7,717.5 1068.8,718.4 1043.0,724.0 1000.7,734.1 954.7,747.0 929.0,737.8 929.0,723.0 967.6,737.8" fill="#f1f1f1" />
<polygon points="1050.4,726.7 1068.8,723.0 1087.2,724.9 1106.5,732.2 1111.1,737.8 1031.1,779.2 1016.4,772.7 986.0,758.9 1070.6,734.1" fill="#5b7858" />
<polygon points="910.7,717.7 954.3,724.6 1013.5,710.7 1041.4,719.4 1041.4,725.5 954.3,748.2 947.3,742.1 922.9,724.6" fill="#f1f1f1" />
<polygon points="922.9,724.6 945.6,717.7 965.6,734.2 947.3,742.1" fill="#5b7858" />
<polygon points="900.3,719.4 910.7,717.7 922.9,724.6 947.3,742.1 954.3,748.2 936.8,752.5" fill="#ececec" />
<polygon points="1031.1,779.2 1111.1,737.8 1111.1,755.2 1031.1,796.6" fill="#7b7b7b" />
<polygon points="659.5,615.3 1031.1,779.2 1031.1,796.6 659.5,657.3" fill="#2e2e2e" />
<polyline points="796.6,675.0 821.8,661.9 837.5,661.0" fill="none" stroke="#111" stroke-width="1.5" />
<polyline points="825.3,689.8 835.8,684.6 837.5,680.2 853.2,677.6" fill="none" stroke="#111" stroke-width="1.5" />
<polyline points="859.3,705.5 861.0,700.3 877.6,693.3" fill="none" stroke="#111" stroke-width="1.5" />
<polyline points="891.5,721.2 896.8,717.7 895.0,712.5 902.0,708.1" fill="none" stroke="#111" stroke-width="1.5" />
<polyline points="909.8,729.9 912.5,726.4 919.4,724.6" fill="none" stroke="#111" stroke-width="1.5" />
<polyline points="956.6,636.6 969.4,630.1" fill="none" stroke="#111" stroke-width="1.5" />
<polyline points="983.2,653.1 999.8,644.8" fill="none" stroke="#111" stroke-width="1.5" />
<polyline points="1010.8,671.1 1035.7,660.8" fill="none" stroke="#111" stroke-width="1.5" />
<polyline points="1014.5,701.0 1028.3,697.3 1050.4,686.2 1072.5,678.0" fill="none" stroke="#111" stroke-width="1.5" />
<polyline points="1040.3,718.4 1065.1,708.3 1108.4,693.6" fill="none" stroke="#111" stroke-width="1.5" />
<polyline points="1016.4,772.7 1026.5,761.7 1044.9,730.4 1039.4,719.4" fill="none" stroke="#111" stroke-width="1.5" />
<polygon points="832.3,648.0 863.7,637.5 954.3,724.6 910.7,719.4 877.6,700.3 849.7,677.6" fill="#ededed" />
<polygon points="832.3,648.0 848.0,642.7 862.8,654.9 848.0,661.9" fill="#4f5a34" />
<polygon points="848.0,661.9 862.8,654.9 865.4,658.4 849.7,665.7" fill="#8b8b8b" />
<polygon points="848.8,670.6 867.1,665.4 884.6,677.6 866.3,684.6" fill="#4f5a34" />
<polygon points="866.3,684.6 884.6,677.6 884.6,680.2 866.3,687.2" fill="#8b8b8b" />
<polygon points="877.6,687.2 895.0,682.0 914.2,693.3 894.2,700.3" fill="#4f5a34" />
<polygon points="894.2,700.3 914.2,693.3 914.2,695.9 894.2,702.9" fill="#8b8b8b" />
<polygon points="893.3,706.4 910.7,702.0 928.1,712.5 910.7,717.7" fill="#4f5a34" />
<polyline points="893.3,706.4 910.7,702.0" fill="none" stroke="#d01878" stroke-width="1.2" />
<polyline points="917.7,712.5 924.6,709.0" fill="none" stroke="#e0541e" stroke-width="1.8" />
<polygon points="911.6,665.4 940.3,649.7 940.3,621.8 1013.5,677.6 956.9,695.9" fill="#eeeeee" />
<polygon points="941.2,622.7 1012.7,677.2 1012.7,679.7 941.2,625.7" fill="#9a9d90" />
<polygon points="912.5,665.7 956.9,695.0 1012.7,677.2 1012.7,682.0 956.9,700.3 912.5,670.6" fill="url(#rail)" />
<polygon points="956.9,697.6 1013.5,679.7 1013.5,712.5 1007.4,714.2 1007.4,688.1 956.9,702.9" fill="#f4f4f4" />
<polygon points="911.6,668.0 956.9,697.6 956.9,702.9 911.6,673.2" fill="#f4f4f4" />
<polygon points="957.8,702.0 1007.4,688.1 1007.4,700.3 957.8,713.3" fill="url(#wood2)" />
<polygon points="957.8,714.2 1007.4,701.1 1007.4,709.8 954.3,725.0" fill="#d5dad2" />
<polygon points="954.3,713.3 957.8,714.2 954.3,725.0 951.7,723.8" fill="#bfc4bc" />
<polygon points="838.4,435.4 906.4,484.1 906.4,668.0 910.7,670.6 957.8,696.4 957.8,712.1 868.0,655.3 868.0,634.4 838.4,606.1" fill="url(#woodDark)" />
<polygon points="868.0,655.3 957.8,712.1 957.8,715.1 868.0,658.4" fill="#222" />
<polygon points="870.6,658.8 954.3,715.1 954.3,723.8 936.8,713.3 905.5,686.3 870.6,661.9" fill="#5a5d58" />
<polygon points="834.2,436.5 838.4,439.3 838.4,616.6 834.2,611.0" fill="#5e5e5e" />
<polygon points="906.4,484.1 910.7,483.1 910.7,670.3 906.4,668.0" fill="#5e5e5e" />
<polygon points="832.3,611.4 868.0,634.0 868.0,655.3 863.7,654.9 863.7,637.5 837.5,621.8 837.5,632.3 832.3,630.5" fill="#f4f4f4" />
<polygon points="837.5,621.8 863.7,637.5 863.7,654.9 837.5,632.3" fill="#585b55" />
<polygon points="837.5,622.7 849.7,630.2 849.7,641.0 837.5,632.3" fill="#cfd4cc" />
<polygon points="912.0,484.5 940.4,478.1 940.2,643.7 912.0,648.0" fill="#e6e6e6" />
<polygon points="913.5,488.0 938.5,482.5 938.5,645.0 913.5,649.0" fill="url(#zzL2)" />
<polygon points="911.6,648.8 939.5,644.8 939.5,651.5 912.5,664.0" fill="#f2f2f2" />
<polygon points="914.2,649.7 924.6,648.3 924.6,656.7 914.2,661.9" fill="#d3d7d0" />
<rect x="937.6" y="644" width="1.2" height="10" fill="#444"/>
<polygon points="834.0,436.4 866.0,429.0 940.4,478.1 908.2,485.2" fill="#ebebeb" stroke="#bdbdbd" stroke-width="0.8"/>
<polyline points="838.0,438.5 864.0,432.5" fill="none" stroke="#c0c0c0" stroke-width="1" />
<polyline points="842.0,438.0 909.0,482.0 936.0,476.0" fill="none" stroke="#cdcdcd" stroke-width="0.8" />
<polygon points="868.6,434.0 885.9,429.3 920.4,451.7 902.1,457.2" fill="#dcdcdc" />
<polygon points="868.6,434.0 902.1,457.2 902.1,465.9 868.6,444.6" fill="#2b2b2b" />
<polygon points="902.1,457.2 920.4,451.7 920.4,461.9 902.1,465.9" fill="#5a5957" />
<polygon points="892.0,466.0 898.0,462.5 900.5,465.5 894.5,469.5" fill="#7b7f94" />
<polygon points="903.0,473.0 909.0,469.5 911.5,472.5 905.5,476.5" fill="#7b7f94" />
<polygon points="906.0,463.0 912.0,459.5 914.5,462.5 908.5,466.5" fill="#7b7f94" />
<polygon points="917.0,468.0 923.0,464.5 925.5,467.5 919.5,471.5" fill="#7b7f94" />
<polygon points="769.7,533.9 777.0,526.6 781.4,533.9 785.7,542.6 781.4,547.7 771.2,544.0" fill="#a3a3a3" />
<polygon points="744.0,557.3 748.6,549.3 750.3,539.9 758.2,537.1 763.7,530.7 769.5,534.4 776.8,533.9 781.0,542.3 788.0,548.0 786.5,557.3 789.7,561.4 786.3,563.1 791.5,567.5 787.4,569.2 789.7,573.8 782.9,574.8 778.3,571.3 772.6,573.3 768.8,570.8 764.8,570.8 760.0,572.8 754.3,570.8 748.5,572.8 744.0,568.8 748.5,568.9 742.1,566.9 747.4,563.1 744.0,560.6" fill="#323232" stroke="#323232" stroke-width="1.6" stroke-linejoin="round"/><polygon points="765.8,534.6 765.8,571.2 760.0,571.6 752.7,568.6 748.5,566.4 749.0,559.7 752.7,545.1 760.0,536.4" fill="#8e8e8e" /><rect x="766.0" y="539.0" width="1.6" height="39.9" fill="#3a3a3a"/>
<polygon points="726.9,569.2 731.6,561.3 733.4,552.1 741.4,549.4 746.9,543.0 752.9,546.7 760.3,546.2 764.5,554.5 771.6,560.1 770.1,569.2 773.4,573.2 769.9,574.9 775.2,579.3 771.0,580.9 773.4,585.4 766.4,586.4 761.8,582.9 755.9,584.9 752.1,582.4 748.1,582.4 743.2,584.4 737.4,582.4 731.5,584.4 726.9,580.4 731.5,580.6 725.0,578.6 730.4,574.9 726.9,572.4" fill="#323232" stroke="#323232" stroke-width="1.6" stroke-linejoin="round"/><polygon points="749.1,546.9 749.1,582.9 743.2,583.3 735.7,580.3 731.5,578.1 732.0,571.6 735.7,557.2 743.2,548.6" fill="#8e8e8e" /><rect x="749.3" y="551.2" width="1.6" height="39.4" fill="#3a3a3a"/>
<polygon points="710.2,579.8 714.9,571.8 716.7,562.4 724.7,559.7 730.2,553.2 736.2,556.9 743.6,556.4 747.8,564.8 754.9,570.5 753.4,579.8 756.7,583.9 753.2,585.6 758.5,590.0 754.3,591.7 756.7,596.3 749.7,597.3 745.1,593.8 739.2,595.8 735.4,593.3 731.4,593.3 726.5,595.3 720.6,593.3 714.8,595.3 710.2,591.3 714.8,591.4 708.3,589.4 713.7,585.6 710.2,583.1" fill="#323232" stroke="#323232" stroke-width="1.6" stroke-linejoin="round"/><polygon points="732.4,557.1 732.4,593.7 726.5,594.2 719.0,591.1 714.8,588.9 715.3,582.3 719.0,567.6 726.5,558.9" fill="#8e8e8e" /><rect x="732.6" y="561.5" width="1.6" height="40.7" fill="#3a3a3a"/>
<polygon points="691.7,592.9 696.6,584.9 698.5,575.5 706.8,572.7 712.7,566.2 718.9,570.0 726.6,569.5 731.1,577.9 738.5,583.6 736.9,592.9 740.3,597.0 736.7,598.6 742.3,603.1 737.9,604.8 740.3,609.4 733.0,610.4 728.2,606.9 722.1,608.9 718.0,606.4 714.0,606.4 708.7,608.4 702.6,606.4 696.5,608.4 691.7,604.4 696.5,604.4 689.7,602.5 695.3,598.6 691.7,596.2" fill="#323232" stroke="#323232" stroke-width="1.6" stroke-linejoin="round"/><polygon points="715.0,570.2 715.0,606.8 708.7,607.2 700.9,604.2 696.5,602.0 697.0,595.3 700.9,580.7 708.7,571.9" fill="#8e8e8e" /><rect x="715.2" y="574.5" width="1.6" height="42.1" fill="#3a3a3a"/>
<polygon points="767.6,600.0 770.4,595.5 771.4,590.2 776.2,588.6 779.5,584.9 783.0,587.1 787.4,586.8 789.9,591.6 794.1,594.8 793.2,600.0 795.2,602.4 793.1,603.3 796.3,605.8 793.8,606.8 795.2,609.4 791.0,610.4 788.3,606.9 784.8,608.9 783.4,606.4 779.4,606.4 777.2,608.4 773.8,606.4 770.3,608.4 767.6,604.4 770.3,606.6 766.5,605.5 769.6,603.3 767.6,601.9" fill="#323232" stroke="#323232" stroke-width="1.6" stroke-linejoin="round"/><polygon points="780.4,587.2 780.4,607.9 777.2,608.2 772.8,606.4 770.3,605.2 770.6,601.4 772.8,593.1 777.2,588.2" fill="#8e8e8e" /><rect x="780.6" y="589.7" width="1.6" height="24.8" fill="#3a3a3a"/>
<path d="M824 601V591" stroke="#444" stroke-width="0.9" fill="none"/><path d="M820.5 591.5L824 590L827.5 591.5M821 587.5L824 590L827 587.5M820 589.5H828" stroke="#3a3a3a" stroke-width="0.9" fill="none"/><ellipse cx="824.5" cy="601.8" rx="3" ry="1.2" fill="#a9a9a9"/>
<path d="M868 690V680" stroke="#444" stroke-width="0.9" fill="none"/><path d="M864.5 680.5L868 679L871.5 680.5M865 676.5L868 679L871 676.5M864 678.5H872" stroke="#3a3a3a" stroke-width="0.9" fill="none"/><ellipse cx="868.5" cy="690.8" rx="3" ry="1.2" fill="#a9a9a9"/>
<path d="M897 712V702" stroke="#444" stroke-width="0.9" fill="none"/><path d="M893.5 702.5L897 701L900.5 702.5M894 698.5L897 701L900 698.5M893 700.5H901" stroke="#3a3a3a" stroke-width="0.9" fill="none"/><ellipse cx="897.5" cy="712.8" rx="3" ry="1.2" fill="#a9a9a9"/>
<path d="M937.7 726V716" stroke="#444" stroke-width="0.9" fill="none"/><path d="M934.2 716.5L937.7 715L941.2 716.5M934.7 712.5L937.7 715L940.7 712.5M933.7 714.5H941.7" stroke="#3a3a3a" stroke-width="0.9" fill="none"/><ellipse cx="938.2" cy="726.8" rx="3" ry="1.2" fill="#a9a9a9"/>
<path d="M950.8 735V725" stroke="#444" stroke-width="0.9" fill="none"/><path d="M947.3 725.5L950.8 724L954.3 725.5M947.8 721.5L950.8 724L953.8 721.5M946.8 723.5H954.8" stroke="#3a3a3a" stroke-width="0.9" fill="none"/><ellipse cx="951.3" cy="735.8" rx="3" ry="1.2" fill="#a9a9a9"/>
<path d="M403.6 264.6H1443.5V825.5H403.6ZM420.7 271.4H1436.6V818.5H420.7ZM543.5 264.6V271.4M543.5 818.5V825.5M623.3 264.6V271.4M623.3 818.5V825.5M703.2 264.6V271.4M703.2 818.5V825.5M826.4 264.6V271.4M826.4 818.5V825.5M949.8 264.6V271.4M949.8 818.5V825.5M1073.3 264.6V271.4M1073.3 818.5V825.5M1196.3 264.6V271.4M1196.3 818.5V825.5M1319.3 264.6V271.4M403.6 429H420.7M403.6 627H420.7" fill="none" stroke="#93defc" stroke-width="3.2"/>
<path d="M403.6 264.6H1443.5V825.5H403.6ZM420.7 271.4H1436.6V818.5H420.7ZM543.5 264.6V271.4M543.5 818.5V825.5M623.3 264.6V271.4M623.3 818.5V825.5M703.2 264.6V271.4M703.2 818.5V825.5M826.4 264.6V271.4M826.4 818.5V825.5M949.8 264.6V271.4M949.8 818.5V825.5M1073.3 264.6V271.4M1073.3 818.5V825.5M1196.3 264.6V271.4M1196.3 818.5V825.5M1319.3 264.6V271.4M403.6 429H420.7M403.6 627H420.7" fill="none" stroke="#0a5c84" stroke-width="1.4"/>
<rect x="1375.3" y="549.1" width="53.3" height="57.2" fill="none" stroke="#6dcaf0" stroke-width="0.8"/>
<rect x="1375.3" y="603.2" width="34.2" height="4.6" fill="none" stroke="#6dcaf0" stroke-width="0.8"/>
<text x="1377" y="551.5" font-size="1.9" fill="#0f4f78" font-weight="bold" font-family="Liberation Sans, sans-serif" textLength="11" lengthAdjust="spacingAndGlyphs">Observações:</text>
<text x="1377" y="556.2" font-size="1.9" fill="#0f4f78" font-weight="bold" font-family="Liberation Sans, sans-serif" textLength="47" lengthAdjust="spacingAndGlyphs">*Para a execução desta planta deverão ser seguidos</text>
<text x="1377" y="558.6" font-size="1.9" fill="#0f4f78" font-weight="bold" font-family="Liberation Sans, sans-serif" textLength="48" lengthAdjust="spacingAndGlyphs">rigorosamente os projetos complementares específicos;</text>
<text x="1377" y="563.3" font-size="1.9" fill="#0f4f78" font-weight="bold" font-family="Liberation Sans, sans-serif" textLength="44" lengthAdjust="spacingAndGlyphs">*Todas as medidas devem ser conferidas na obra;</text>
<text x="1377" y="568" font-size="1.9" fill="#0f4f78" font-weight="bold" font-family="Liberation Sans, sans-serif" textLength="40" lengthAdjust="spacingAndGlyphs">*Em caso de dúvidas, consultar o arquiteto:</text>
<text x="1377" y="570.4" font-size="1.9" fill="#0f4f78" font-weight="bold" font-family="Liberation Sans, sans-serif" textLength="28" lengthAdjust="spacingAndGlyphs">          1. Projeto executivo</text>
<text x="1377" y="572.8" font-size="1.9" fill="#0f4f78" font-weight="bold" font-family="Liberation Sans, sans-serif" textLength="32" lengthAdjust="spacingAndGlyphs">          2. Projeto de prefeitura</text>
<text x="1377" y="575.2" font-size="1.9" fill="#0f4f78" font-weight="bold" font-family="Liberation Sans, sans-serif" textLength="34" lengthAdjust="spacingAndGlyphs">          3. Projetos complementares</text>
<text x="1377" y="580" font-size="1.9" fill="#0f4f78" font-weight="bold" font-family="Liberation Sans, sans-serif" textLength="48" lengthAdjust="spacingAndGlyphs">*Este projeto é propriedade intelectual protegida pela</text>
<text x="1377" y="582.4" font-size="1.9" fill="#0f4f78" font-weight="bold" font-family="Liberation Sans, sans-serif" textLength="43" lengthAdjust="spacingAndGlyphs">lei 9610, reprodução proibida sem autorização;</text>
<text x="1377" y="587" font-size="1.9" fill="#0f4f78" font-weight="bold" font-family="Liberation Sans, sans-serif" textLength="45" lengthAdjust="spacingAndGlyphs">*As cotas prevalecem sobre as medidas em escala,</text>
<text x="1377" y="589.4" font-size="1.9" fill="#0f4f78" font-weight="bold" font-family="Liberation Sans, sans-serif" textLength="35" lengthAdjust="spacingAndGlyphs">verificar no local antes de executar;</text>
<text x="1377" y="594" font-size="1.9" fill="#0f4f78" font-weight="bold" font-family="Liberation Sans, sans-serif" textLength="19" lengthAdjust="spacingAndGlyphs">*N.A. = Nível acabado</text>
<text x="1377" y="598.8" font-size="1.9" fill="#0f4f78" font-weight="bold" font-family="Liberation Sans, sans-serif" textLength="17" lengthAdjust="spacingAndGlyphs">*N.O. = Nível osso</text>
<text x="1377" y="606.3" font-size="1.9" fill="#0f4f78" font-weight="bold" font-family="Liberation Sans, sans-serif" textLength="18" lengthAdjust="spacingAndGlyphs">LEGENDA DE SÍMBOLOS</text>
<rect x="1389.3" y="609" width="45.3" height="4.2" fill="none" stroke="#6dcaf0" stroke-width="0.8"/>
<text x="1390.3" y="612" font-size="1.9" fill="#0f4f78" font-weight="bold" font-family="Liberation Sans, sans-serif" >Quadro</text>
<rect x="1389.3" y="615" width="45.3" height="4.3" fill="none" stroke="#6dcaf0" stroke-width="0.8"/>
<text x="1390.3" y="618" font-size="1.9" fill="#0f4f78" font-weight="bold" font-family="Liberation Sans, sans-serif" >Luminária</text>
<rect x="1389.3" y="620.1" width="45.3" height="4.2" fill="none" stroke="#6dcaf0" stroke-width="0.8"/>
<text x="1390.3" y="623.1" font-size="1.9" fill="#0f4f78" font-weight="bold" font-family="Liberation Sans, sans-serif" >Ponto de energia ou tomada</text>
<rect x="1389.3" y="627.1" width="45.3" height="4.5" fill="none" stroke="#6dcaf0" stroke-width="0.8"/>
<text x="1390.3" y="630.1" font-size="1.9" fill="#0f4f78" font-weight="bold" font-family="Liberation Sans, sans-serif" >Ponto seco</text>
<rect x="1389.3" y="633.4" width="45.3" height="4.9" fill="none" stroke="#6dcaf0" stroke-width="0.8"/>
<text x="1390.3" y="636.4" font-size="1.9" fill="#0f4f78" font-weight="bold" font-family="Liberation Sans, sans-serif" >Sentido de caimento do piso acabado</text>
<rect x="1389.3" y="640.4" width="40.3" height="4.9" fill="none" stroke="#6dcaf0" stroke-width="0.8"/>
<text x="1390.3" y="643.4" font-size="1.9" fill="#0f4f78" font-weight="bold" font-family="Liberation Sans, sans-serif" >Área sobre a laje impermeabilizada</text>
<rect x="1389.3" y="645.9" width="29.0" height="6.4" fill="none" stroke="#6dcaf0" stroke-width="0.8"/>
<text x="1390.3" y="648.9" font-size="1.9" fill="#0f4f78" font-weight="bold" font-family="Liberation Sans, sans-serif" >Projeção de guarda-corpo</text>
<rect x="1378" y="609" width="4.2" height="4" fill="#0f6390"/><path d="M1379 612L1381.2 610" stroke="#dff" stroke-width="0.6"/>
<path d="M1377.5 617.5L1380 615.5L1382.5 618.5M1380 615.5V619" stroke="#0f6390" stroke-width="1" fill="none"/>
<ellipse cx="1380.3" cy="621.5" rx="1.6" ry="2.4" fill="none" stroke="#0f6390" stroke-width="1"/>
<rect x="1378.3" y="627.3" width="4" height="4" rx="1" fill="none" stroke="#0f6390" stroke-width="1"/>
<polygon points="1377.5,636.5 1382,633 1385,635.5 1380.5,639.5" fill="none" stroke="#0f6390" stroke-width="0.9"/><polygon points="1379,636.5 1383.5,633.5 1384.5,634.7 1380,637.8" fill="#1a64e0"/>
<rect x="1375.3" y="640.4" width="11.2" height="5.4" fill="none" stroke="#6dcaf0" stroke-width="0.8"/>
<text x="1377" y="644.3" font-size="2.6" fill="#0f4f78" font-weight="bold" font-family="Liberation Sans, sans-serif" >L.P.I.</text>
<path d="M1377.5 647.2H1382.5L1385.5 649.5L1382.5 651.6H1377.5" stroke="#0f6390" stroke-width="1" fill="none"/>
<path d="M1319 665.2H1436.2" stroke="#93defc" stroke-width="3.0"/><path d="M1319 665.2H1436.2" stroke="#0a5c84" stroke-width="1.4"/>
<path d="M1319 670.9H1436.2" stroke="#93defc" stroke-width="3.0"/><path d="M1319 670.9H1436.2" stroke="#0a5c84" stroke-width="1.4"/>
<path d="M1319 676.6H1436.2" stroke="#93defc" stroke-width="3.0"/><path d="M1319 676.6H1436.2" stroke="#0a5c84" stroke-width="1.4"/>
<path d="M1319 682.3H1436.2" stroke="#93defc" stroke-width="3.0"/><path d="M1319 682.3H1436.2" stroke="#0a5c84" stroke-width="1.4"/>
<path d="M1319 688H1436.2" stroke="#93defc" stroke-width="3.0"/><path d="M1319 688H1436.2" stroke="#0a5c84" stroke-width="1.4"/>
<path d="M1319 693.6H1436.2" stroke="#93defc" stroke-width="3.0"/><path d="M1319 693.6H1436.2" stroke="#0a5c84" stroke-width="1.4"/>
<path d="M1319 699.3H1436.2" stroke="#93defc" stroke-width="3.0"/><path d="M1319 699.3H1436.2" stroke="#0a5c84" stroke-width="1.4"/>
<path d="M1319 705.1H1436.2" stroke="#93defc" stroke-width="3.0"/><path d="M1319 705.1H1436.2" stroke="#0a5c84" stroke-width="1.4"/>
<path d="M1332.4 659V705" stroke="#93defc" stroke-width="3.0"/><path d="M1332.4 659V705" stroke="#0a5c84" stroke-width="1.4"/>
<path d="M1348.1 659V705" stroke="#93defc" stroke-width="3.0"/><path d="M1348.1 659V705" stroke="#0a5c84" stroke-width="1.4"/>
<rect x="1322.5" y="661.1" width="5.0" height="3.0" fill="none" stroke="#6dcaf0" stroke-width="0.8"/>
<text x="1323.3" y="663.5" font-size="1.8" fill="#0f4f78" font-weight="bold" font-family="Liberation Sans, sans-serif" >R7</text>
<rect x="1322.5" y="666.6" width="5.0" height="3.0" fill="none" stroke="#6dcaf0" stroke-width="0.8"/>
<text x="1323.3" y="669" font-size="1.8" fill="#0f4f78" font-weight="bold" font-family="Liberation Sans, sans-serif" >R6</text>
<rect x="1322.5" y="672.4" width="5.0" height="3.0" fill="none" stroke="#6dcaf0" stroke-width="0.8"/>
<text x="1323.3" y="674.8" font-size="1.8" fill="#0f4f78" font-weight="bold" font-family="Liberation Sans, sans-serif" >R5</text>
<rect x="1322.5" y="678.1" width="5.0" height="3.0" fill="none" stroke="#6dcaf0" stroke-width="0.8"/>
<text x="1323.3" y="680.5" font-size="1.8" fill="#0f4f78" font-weight="bold" font-family="Liberation Sans, sans-serif" >R4</text>
<rect x="1322.5" y="683.8000000000001" width="5.0" height="3.0" fill="none" stroke="#6dcaf0" stroke-width="0.8"/>
<text x="1323.3" y="686.2" font-size="1.8" fill="#0f4f78" font-weight="bold" font-family="Liberation Sans, sans-serif" >R3</text>
<rect x="1322.5" y="689.4" width="5.0" height="3.0" fill="none" stroke="#6dcaf0" stroke-width="0.8"/>
<text x="1323.3" y="691.8" font-size="1.8" fill="#0f4f78" font-weight="bold" font-family="Liberation Sans, sans-serif" >R2</text>
<rect x="1322.5" y="695.1" width="5.0" height="3.0" fill="none" stroke="#6dcaf0" stroke-width="0.8"/>
<text x="1323.3" y="697.5" font-size="1.8" fill="#0f4f78" font-weight="bold" font-family="Liberation Sans, sans-serif" >R1</text>
<rect x="1349.5" y="694.3" width="20.0" height="4.0" fill="none" stroke="#6dcaf0" stroke-width="0.8"/>
<text x="1350" y="697.6" font-size="2.4" fill="#0f4f78" font-weight="bold" font-family="Liberation Sans, sans-serif" >Emissão inicial</text>
<rect x="1319.3" y="700.2" width="10.2" height="4.0" fill="none" stroke="#6dcaf0" stroke-width="0.8"/>
<text x="1319.8" y="703.6" font-size="2.5" fill="#0f4f78" font-weight="bold" font-family="Liberation Sans, sans-serif" >Rev. Nº</text>
<rect x="1334.5" y="700.2" width="12.0" height="4.0" fill="none" stroke="#6dcaf0" stroke-width="0.8"/>
<text x="1336" y="703.6" font-size="2.5" fill="#0f4f78" font-weight="bold" font-family="Liberation Sans, sans-serif" >Data</text>
<rect x="1349.5" y="700.2" width="37.0" height="4.0" fill="none" stroke="#6dcaf0" stroke-width="0.8"/>
<text x="1350" y="703.6" font-size="2.5" fill="#0f4f78" font-weight="bold" font-family="Liberation Sans, sans-serif" >Descrição das Modificações</text>
<path d="M1319 711.8H1436.2" stroke="#93defc" stroke-width="3.0"/><path d="M1319 711.8H1436.2" stroke="#0a5c84" stroke-width="1.4"/>
<path d="M1319 737.7H1436.2" stroke="#93defc" stroke-width="3.0"/><path d="M1319 737.7H1436.2" stroke="#0a5c84" stroke-width="1.4"/>
<path d="M1319 764.6H1436.2" stroke="#93defc" stroke-width="3.0"/><path d="M1319 764.6H1436.2" stroke="#0a5c84" stroke-width="1.4"/>
<path d="M1319 783.4H1436.2" stroke="#93defc" stroke-width="3.0"/><path d="M1319 783.4H1436.2" stroke="#0a5c84" stroke-width="1.4"/>
<path d="M1403 717.1H1436.2" stroke="#93defc" stroke-width="2.8"/><path d="M1403 717.1H1436.2" stroke="#0a5c84" stroke-width="1.2"/>
<path d="M1403 722.1H1436.2" stroke="#93defc" stroke-width="2.8"/><path d="M1403 722.1H1436.2" stroke="#0a5c84" stroke-width="1.2"/>
<path d="M1403 727.3H1436.2" stroke="#93defc" stroke-width="2.8"/><path d="M1403 727.3H1436.2" stroke="#0a5c84" stroke-width="1.2"/>
<path d="M1403 732.3H1436.2" stroke="#93defc" stroke-width="2.8"/><path d="M1403 732.3H1436.2" stroke="#0a5c84" stroke-width="1.2"/>
<path d="M1403 747.2H1436.2" stroke="#93defc" stroke-width="2.8"/><path d="M1403 747.2H1436.2" stroke="#0a5c84" stroke-width="1.2"/>
<path d="M1403 756.5H1436.2" stroke="#93defc" stroke-width="2.8"/><path d="M1403 756.5H1436.2" stroke="#0a5c84" stroke-width="1.2"/>
<path d="M1403 774.4H1436.2" stroke="#93defc" stroke-width="2.8"/><path d="M1403 774.4H1436.2" stroke="#0a5c84" stroke-width="1.2"/>
<path d="M1403 805.3H1436.2" stroke="#93defc" stroke-width="2.8"/><path d="M1403 805.3H1436.2" stroke="#0a5c84" stroke-width="1.2"/>
<path d="M1403 809.5H1436.2" stroke="#93defc" stroke-width="2.8"/><path d="M1403 809.5H1436.2" stroke="#0a5c84" stroke-width="1.2"/>
<path d="M1403 814.5H1436.2" stroke="#93defc" stroke-width="2.8"/><path d="M1403 814.5H1436.2" stroke="#0a5c84" stroke-width="1.2"/>
<rect x="1319" y="711.8" width="14.3" height="3.5" fill="none" stroke="#6dcaf0" stroke-width="0.7"/>
<text x="1319.4" y="714.5" font-size="1.8" fill="#0f4f78" font-weight="bold" font-family="Liberation Sans, sans-serif" >LOGOMARCA</text>
<rect x="1319" y="738" width="29.5" height="3.7" fill="none" stroke="#6dcaf0" stroke-width="0.7"/>
<text x="1319.4" y="740.9000000000001" font-size="1.8" fill="#0f4f78" font-weight="bold" font-family="Liberation Sans, sans-serif" >RESPONSÁVEL TÉCNICO PROJETO</text>
<rect x="1319" y="767.3" width="33.0" height="6.2" fill="none" stroke="#6dcaf0" stroke-width="0.7"/>
<rect x="1319" y="775.3" width="42.0" height="5.4" fill="none" stroke="#6dcaf0" stroke-width="0.7"/>
<rect x="1319" y="783.4" width="19.6" height="3.0" fill="none" stroke="#6dcaf0" stroke-width="0.7"/>
<text x="1319.4" y="785.6" font-size="1.8" fill="#0f4f78" font-weight="bold" font-family="Liberation Sans, sans-serif" >RESPONSÁVEL</text>
<rect x="1403" y="712.2" width="13.0" height="3.6" fill="none" stroke="#6dcaf0" stroke-width="0.7"/>
<text x="1403.4" y="715.0" font-size="1.8" fill="#0f4f78" font-weight="bold" font-family="Liberation Sans, sans-serif" >ESCALA</text>
<rect x="1403" y="717.5" width="10.0" height="3.3" fill="none" stroke="#6dcaf0" stroke-width="0.7"/>
<text x="1403.4" y="720.0" font-size="1.8" fill="#0f4f78" font-weight="bold" font-family="Liberation Sans, sans-serif" >DATA</text>
<rect x="1403" y="722.5" width="9.0" height="3.1" fill="none" stroke="#6dcaf0" stroke-width="0.7"/>
<text x="1403.4" y="724.8000000000001" font-size="1.8" fill="#0f4f78" font-weight="bold" font-family="Liberation Sans, sans-serif" >FOLHA</text>
<rect x="1403" y="727.6" width="7.0" height="3.2" fill="none" stroke="#6dcaf0" stroke-width="0.7"/>
<text x="1403.4" y="730.0" font-size="1.8" fill="#0f4f78" font-weight="bold" font-family="Liberation Sans, sans-serif" >REV</text>
<rect x="1403" y="732.6" width="7.0" height="3.2" fill="none" stroke="#6dcaf0" stroke-width="0.7"/>
<text x="1403.4" y="735.0" font-size="1.8" fill="#0f4f78" font-weight="bold" font-family="Liberation Sans, sans-serif" >TIPO</text>
<rect x="1403" y="739" width="24.0" height="7.5" fill="none" stroke="#6dcaf0" stroke-width="0.7"/>
<rect x="1403" y="747.6" width="16.0" height="3.6" fill="none" stroke="#6dcaf0" stroke-width="0.7"/>
<text x="1403.4" y="750.4000000000001" font-size="1.8" fill="#0f4f78" font-weight="bold" font-family="Liberation Sans, sans-serif" >DESENHISTA</text>
<rect x="1403" y="756.8" width="11.5" height="3.2" fill="none" stroke="#6dcaf0" stroke-width="0.7"/>
<text x="1403.4" y="759.2" font-size="1.8" fill="#0f4f78" font-weight="bold" font-family="Liberation Sans, sans-serif" >ARQUIVO</text>
<rect x="1403" y="765" width="19.5" height="3.8" fill="none" stroke="#6dcaf0" stroke-width="0.7"/>
<text x="1403.4" y="768.0" font-size="1.8" fill="#0f4f78" font-weight="bold" font-family="Liberation Sans, sans-serif" >NÚMERO DA PRANCHA</text>
<rect x="1403" y="769.5" width="6.0" height="3.1" fill="none" stroke="#6dcaf0" stroke-width="0.7"/>
<text x="1403.4" y="771.8000000000001" font-size="1.8" fill="#0f4f78" font-weight="bold" font-family="Liberation Sans, sans-serif" >REV</text>
<rect x="1403" y="774.8" width="10.0" height="3.2" fill="none" stroke="#6dcaf0" stroke-width="0.7"/>
<text x="1403.4" y="777.2" font-size="1.8" fill="#0f4f78" font-weight="bold" font-family="Liberation Sans, sans-serif" >REVISÃO</text>
<rect x="1403" y="783.8" width="7.0" height="2.8" fill="none" stroke="#6dcaf0" stroke-width="0.7"/>
<text x="1403.4" y="785.8000000000001" font-size="1.8" fill="#0f4f78" font-weight="bold" font-family="Liberation Sans, sans-serif" >FOLHA</text>
<rect x="1403" y="805.8" width="6.0" height="2.8" fill="none" stroke="#6dcaf0" stroke-width="0.7"/>
<text x="1403.4" y="807.8000000000001" font-size="1.8" fill="#0f4f78" font-weight="bold" font-family="Liberation Sans, sans-serif" >DATA</text>
<rect x="1403" y="810.5" width="4.0" height="2.8" fill="none" stroke="#6dcaf0" stroke-width="0.7"/>
<text x="1403.4" y="812.5" font-size="1.8" fill="#0f4f78" font-weight="bold" font-family="Liberation Sans, sans-serif" >REV</text>
<rect x="1403" y="814.6" width="9.5" height="2.4" fill="none" stroke="#6dcaf0" stroke-width="0.7"/>
<text x="1403.4" y="816.2" font-size="1.8" fill="#0f4f78" font-weight="bold" font-family="Liberation Sans, sans-serif" >ARQUIVO</text>
<text x="1319.6" y="772.5" font-size="3.1" fill="#1d5b80" font-weight="bold" font-family="Liberation Sans, sans-serif" font-weight="bold">EDIFÍCIO COMERCIAL</text>
<text x="1319.6" y="777.6" font-size="1.9" fill="#0f4f78" font-weight="bold" font-family="Liberation Sans, sans-serif" >AV. FAGUNDES FILHO 0000</text>
<text x="1319.6" y="780" font-size="1.9" fill="#0f4f78" font-weight="bold" font-family="Liberation Sans, sans-serif" >BAIRRO - MUNICÍPIO/UF - ÁREA DO TERRENO</text>
<text x="1403.4" y="742.3" font-size="2.6" fill="#1d5b80" font-weight="bold" font-family="Liberation Sans, sans-serif" font-weight="bold">EXECUTIVO</text>
<text x="1403.4" y="745.8" font-size="2.6" fill="#1d5b80" font-weight="bold" font-family="Liberation Sans, sans-serif" font-weight="bold">DETALHAMENTO</text>
<text x="1338" y="732.2" font-size="16" fill="#111" font-family="Liberation Sans, sans-serif" textLength="14.6" lengthAdjust="spacingAndGlyphs" stroke="#fff" stroke-width="0.3">HJ</text>
<path d="M1354.3 718.5V733" stroke="#222" stroke-width="0.6"/>
<text x="1356.2" y="725.4" font-size="4.6" fill="#111" font-family="Liberation Sans, sans-serif" textLength="30.8" lengthAdjust="spacingAndGlyphs">ARQUITETURA</text>
<text x="1356.2" y="730.4" font-size="4.6" fill="#111" font-family="Liberation Sans, sans-serif" textLength="30.8" lengthAdjust="spacingAndGlyphs">E INTERIORES</text>
<rect x="1404.9" y="794.1" width="18.8" height="7.7" fill="none" stroke="#6dcaf0" stroke-width="0.8"/>
<text x="1405.5" y="801" font-size="8" fill="#46708c" font-family="Liberation Sans, sans-serif" textLength="17.6" lengthAdjust="spacingAndGlyphs">EX16</text>
</svg>
<div class="r" style="left:1499.5px;top:201px;width:35.5px;height:74.5px;background:#f3f3f3;border:1.5px solid #b4b4b4;border-radius:5px;box-sizing:border-box"></div>
<svg style="left:1499.5px;top:201px" width="36" height="75"><circle cx="28.5" cy="6.8" r="3.3" fill="none" stroke="#9a9a9a" stroke-width="1"/><path d="M26.8 5.1L30.2 8.5M30.2 5.1L26.8 8.5" stroke="#9a9a9a" stroke-width="0.9"/><circle cx="28.5" cy="67.5" r="3.3" fill="none" stroke="#9a9a9a" stroke-width="1"/><path d="M26.7 66.5H30.3L28.5 69Z" fill="#9a9a9a"/><rect x="11.5" y="25.5" width="10" height="10" fill="#b9d7a5" stroke="#7fae63" stroke-width="1"/><circle cx="21.5" cy="33.5" r="3.2" fill="#f3f3f3" stroke="#8a8a8a" stroke-width="1.2"/><path d="M23.7 36L26.5 39" stroke="#8a8a8a" stroke-width="1.5"/><polygon points="15.5,50 21,50 18.2,53" fill="#8a8a8a"/></svg>
<!-- sec_props -->
<div class="r" style="left:1556.4px;top:178px;width:361px;height:16.3px;background:#222933;"></div>
<span class="t" style="left:1559.0px;top:178.6px;transform:scaleX(0.9787);color:#f2f2f2;">Propriedades</span>
<svg style="left:1905px;top:182px" width="10" height="10"><path d="M0.5 0.5L9.5 9.5M9.5 0.5L0.5 9.5" stroke="#c4c8d2" stroke-width="1.5"/></svg>
<div class="r" style="left:1899px;top:298px;width:18px;height:683px;background:#323a48;"></div>
<div class="r" style="left:1899px;top:314px;width:18px;height:1px;background:#465064;"></div>
<div class="r" style="left:1899px;top:964px;width:18px;height:1px;background:#465064;"></div>
<div class="r" style="left:1556.4px;top:980.3px;width:361px;height:24.3px;background:#2e3441;"></div>
<div class="r" style="left:1558px;top:195px;width:357px;height:70px;border:1px solid #4a5468;box-sizing:border-box"></div>
<div class="r" style="left:1561px;top:197px;width:66px;height:66px;border:1px solid #4a5569;box-sizing:border-box"></div>
<svg style="left:1578px;top:218px" width="32" height="24"><polygon points="0,0 22,0 32,10 32,24 0,24" fill="#e3e3e3"/><polygon points="24,0.5 24,8 31.5,8" fill="#e3e3e3"/><path d="M23 0V9H32" fill="none" stroke="#3b4453" stroke-width="1.2"/></svg>
<span class="t" style="left:1631.0px;top:222.8px;transform:scaleX(0.9531);color:#f2f2f2;">Folha</span>
<svg style="left:1900px;top:229px" width="8" height="5"><polygon points="0,0 8,0 4,4.5" fill="#5d6b84"/></svg>
<span class="t" style="left:1562.0px;top:271.8px;transform:scaleX(0.9592);color:#f2f2f2;">Folha: 3d</span>
<svg style="left:1815px;top:276px" width="8" height="6"><path d="M1 1L4 4.5L7 1" fill="none" stroke="#7485a0" stroke-width="1.5"/></svg>
<div class="r" style="left:1558px;top:291px;width:270px;height:1.5px;background:#6a7890;"></div>
<svg style="left:1833px;top:272px" width="17" height="17"><g fill="none" stroke="#e8e8e8" stroke-width="1"><rect x="0.5" y="0.5" width="6" height="6" stroke-dasharray="2 1"/><rect x="9.5" y="0.5" width="6" height="6"/><rect x="0.5" y="9.5" width="6" height="6"/></g><rect x="9" y="8" width="7" height="8" fill="#e8e8e8"/><rect x="10.5" y="9.5" width="4" height="2" fill="#3f7fd0"/></svg>
<span class="t" style="left:1854.0px;top:271.8px;transform:scaleX(1.0116);color:#f2f2f2;">Editar tipo</span>
<div class="r" style="left:1558px;top:298px;width:341px;height:17px;background:#222933;"></div>
<span class="t" style="left:1560.0px;top:297.6px;transform:scaleX(0.9387);color:#f2f2f2;font-weight:bold;">Gráficos</span>
<svg style="left:1886px;top:302px" width="7" height="9"><path d="M0.8 4L3.5 1.2L6.2 4M0.8 8L3.5 5.2L6.2 8" fill="none" stroke="#f2f2f2" stroke-width="1.3"/></svg>
<div class="r" style="left:1558px;top:333px;width:340px;height:1px;background:#525d70;"></div>
<span class="t" style="left:1566.0px;top:316.1px;transform:scaleX(0.9857);color:#f2f2f2;">Visibilidade/Sobreposição d...</span>
<div class="r" style="left:1724px;top:317px;width:161px;height:15px;border:1px solid #8593aa;box-sizing:border-box"></div>
<span class="t" style="left:1785.5px;top:316.8px;transform:scaleX(0.9364);color:#f2f2f2;">Editar...</span>
<div class="r" style="left:1558px;top:351px;width:340px;height:1px;background:#525d70;"></div>
<span class="t" style="left:1566.0px;top:334.1px;transform:scaleX(0.8816);color:#8d95a3;">Escala</span>
<div class="r" style="left:1558px;top:352px;width:341px;height:17px;background:#222933;"></div>
<span class="t" style="left:1560.0px;top:351.6px;transform:scaleX(1.0511);color:#f2f2f2;font-weight:bold;">Texto</span>
<svg style="left:1886px;top:356px" width="7" height="9"><path d="M0.8 4L3.5 1.2L6.2 4M0.8 8L3.5 5.2L6.2 8" fill="none" stroke="#f2f2f2" stroke-width="1.3"/></svg>
<div class="r" style="left:1558px;top:387px;width:340px;height:1px;background:#525d70;"></div>
<span class="t" style="left:1566.0px;top:370.1px;transform:scaleX(1.0097);color:#f2f2f2;">Complemento</span>
<div class="r" style="left:1888px;top:371px;width:8px;height:14px;border:1px solid #77829a;box-sizing:border-box"></div>
<div class="r" style="left:1558px;top:405px;width:340px;height:1px;background:#525d70;"></div>
<span class="t" style="left:1566.0px;top:388.1px;transform:scaleX(0.9131);color:#f2f2f2;">CONTEÚDO</span>
<div class="r" style="left:1888px;top:389px;width:8px;height:14px;border:1px solid #77829a;box-sizing:border-box"></div>
<div class="r" style="left:1558px;top:423px;width:340px;height:1px;background:#525d70;"></div>
<span class="t" style="left:1566.0px;top:406.1px;transform:scaleX(0.9249);color:#f2f2f2;">CONTEÚDO DA PRANCHA</span>
<div class="r" style="left:1888px;top:407px;width:8px;height:14px;border:1px solid #77829a;box-sizing:border-box"></div>
<div class="r" style="left:1558px;top:441px;width:340px;height:1px;background:#525d70;"></div>
<span class="t" style="left:1566.0px;top:424.1px;transform:scaleX(0.9311);color:#f2f2f2;">CONTEÚDO DA PRANCHA 2</span>
<div class="r" style="left:1888px;top:425px;width:8px;height:14px;border:1px solid #77829a;box-sizing:border-box"></div>
<div class="r" style="left:1558px;top:459px;width:340px;height:1px;background:#525d70;"></div>
<span class="t" style="left:1566.0px;top:442.1px;transform:scaleX(0.9311);color:#f2f2f2;">CONTEÚDO DA PRANCHA 3</span>
<div class="r" style="left:1888px;top:443px;width:8px;height:14px;border:1px solid #77829a;box-sizing:border-box"></div>
<div class="r" style="left:1558px;top:477px;width:340px;height:1px;background:#525d70;"></div>
<span class="t" style="left:1566.0px;top:460.1px;transform:scaleX(0.9311);color:#f2f2f2;">CONTEÚDO DA PRANCHA 4</span>
<div class="r" style="left:1888px;top:461px;width:8px;height:14px;border:1px solid #77829a;box-sizing:border-box"></div>
<div class="r" style="left:1558px;top:495px;width:340px;height:1px;background:#525d70;"></div>
<span class="t" style="left:1566.0px;top:478.1px;transform:scaleX(0.9623);color:#f2f2f2;">Data - Revisão 01</span>
<div class="r" style="left:1888px;top:479px;width:8px;height:14px;border:1px solid #77829a;box-sizing:border-box"></div>
<div class="r" style="left:1558px;top:513px;width:340px;height:1px;background:#525d70;"></div>
<span class="t" style="left:1566.0px;top:496.1px;transform:scaleX(0.9623);color:#f2f2f2;">Data - Revisão 02</span>
<div class="r" style="left:1888px;top:497px;width:8px;height:14px;border:1px solid #77829a;box-sizing:border-box"></div>
<div class="r" style="left:1558px;top:531px;width:340px;height:1px;background:#525d70;"></div>
<span class="t" style="left:1566.0px;top:514.1px;transform:scaleX(0.9623);color:#f2f2f2;">Data - Revisão 03</span>
<div class="r" style="left:1888px;top:515px;width:8px;height:14px;border:1px solid #77829a;box-sizing:border-box"></div>
<div class="r" style="left:1558px;top:549px;width:340px;height:1px;background:#525d70;"></div>
<span class="t" style="left:1566.0px;top:532.1px;transform:scaleX(0.9623);color:#f2f2f2;">Data - Revisão 04</span>
<div class="r" style="left:1888px;top:533px;width:8px;height:14px;border:1px solid #77829a;box-sizing:border-box"></div>
<div class="r" style="left:1558px;top:567px;width:340px;height:1px;background:#525d70;"></div>
<span class="t" style="left:1566.0px;top:550.1px;transform:scaleX(0.9623);color:#f2f2f2;">Data - Revisão 05</span>
<div class="r" style="left:1888px;top:551px;width:8px;height:14px;border:1px solid #77829a;box-sizing:border-box"></div>
<div class="r" style="left:1558px;top:585px;width:340px;height:1px;background:#525d70;"></div>
<span class="t" style="left:1566.0px;top:568.1px;transform:scaleX(0.9623);color:#f2f2f2;">Data - Revisão 06</span>
<div class="r" style="left:1888px;top:569px;width:8px;height:14px;border:1px solid #77829a;box-sizing:border-box"></div>
<div class="r" style="left:1558px;top:603px;width:340px;height:1px;background:#525d70;"></div>
<span class="t" style="left:1566.0px;top:586.1px;transform:scaleX(0.9359);color:#f2f2f2;">DATA EMISSÃO</span>
<div class="r" style="left:1888px;top:587px;width:8px;height:14px;border:1px solid #77829a;box-sizing:border-box"></div>
<div class="r" style="left:1558px;top:621px;width:340px;height:1px;background:#525d70;"></div>
<span class="t" style="left:1566.0px;top:604.1px;transform:scaleX(0.9462);color:#f2f2f2;">DATA PRANCHA</span>
<div class="r" style="left:1888px;top:605px;width:8px;height:14px;border:1px solid #77829a;box-sizing:border-box"></div>
<div class="r" style="left:1558px;top:639px;width:340px;height:1px;background:#525d70;"></div>
<span class="t" style="left:1566.0px;top:622.1px;transform:scaleX(0.8857);color:#f2f2f2;">DESENHISTA</span>
<div class="r" style="left:1888px;top:623px;width:8px;height:14px;border:1px solid #77829a;box-sizing:border-box"></div>
<div class="r" style="left:1558px;top:657px;width:340px;height:1px;background:#525d70;"></div>
<span class="t" style="left:1566.0px;top:640.1px;transform:scaleX(0.9614);color:#f2f2f2;">Desenhista</span>
<div class="r" style="left:1888px;top:641px;width:8px;height:14px;border:1px solid #77829a;box-sizing:border-box"></div>
<div class="r" style="left:1558px;top:675px;width:340px;height:1px;background:#525d70;"></div>
<span class="t" style="left:1566.0px;top:658.1px;transform:scaleX(0.8934);color:#f2f2f2;">DESENHOS QUE A PRANC...</span>
<div class="r" style="left:1888px;top:659px;width:8px;height:14px;border:1px solid #77829a;box-sizing:border-box"></div>
<div class="r" style="left:1558px;top:693px;width:340px;height:1px;background:#525d70;"></div>
<span class="t" style="left:1566.0px;top:676.1px;transform:scaleX(0.8545);color:#f2f2f2;">ESCALA</span>
<div class="r" style="left:1888px;top:677px;width:8px;height:14px;border:1px solid #77829a;box-sizing:border-box"></div>
<div class="r" style="left:1558px;top:711px;width:340px;height:1px;background:#525d70;"></div>
<span class="t" style="left:1566.0px;top:694.1px;transform:scaleX(0.9634);color:#f2f2f2;">Liberação</span>
<div class="r" style="left:1888px;top:695px;width:8px;height:14px;border:1px solid #77829a;box-sizing:border-box"></div>
<div class="r" style="left:1558px;top:729px;width:340px;height:1px;background:#525d70;"></div>
<span class="t" style="left:1566.0px;top:712.1px;transform:scaleX(0.9482);color:#f2f2f2;">NOME DO ARQUIVO</span>
<div class="r" style="left:1888px;top:713px;width:8px;height:14px;border:1px solid #77829a;box-sizing:border-box"></div>
<div class="r" style="left:1558px;top:747px;width:340px;height:1px;background:#525d70;"></div>
<span class="t" style="left:1566.0px;top:730.1px;transform:scaleX(0.9466);color:#f2f2f2;">N° DA FOLHA</span>
<div class="r" style="left:1888px;top:731px;width:8px;height:14px;border:1px solid #77829a;box-sizing:border-box"></div>
<div class="r" style="left:1558px;top:765px;width:340px;height:1px;background:#525d70;"></div>
<span class="t" style="left:1566.0px;top:748.1px;transform:scaleX(0.9332);color:#f2f2f2;">NÚMERO DA PRANCHA</span>
<div class="r" style="left:1888px;top:749px;width:8px;height:14px;border:1px solid #77829a;box-sizing:border-box"></div>
<div class="r" style="left:1558px;top:783px;width:340px;height:1px;background:#525d70;"></div>
<span class="t" style="left:1566.0px;top:766.1px;transform:scaleX(0.9162);color:#f2f2f2;">NÚMERO DA REVISÃO</span>
<div class="r" style="left:1888px;top:767px;width:8px;height:14px;border:1px solid #77829a;box-sizing:border-box"></div>
<div class="r" style="left:1558px;top:801px;width:340px;height:1px;background:#525d70;"></div>
<span class="t" style="left:1566.0px;top:784.1px;transform:scaleX(0.9805);color:#f2f2f2;">Nível Osso do Pavimento</span>
<div class="r" style="left:1888px;top:785px;width:8px;height:14px;border:1px solid #77829a;box-sizing:border-box"></div>
<div class="r" style="left:1558px;top:819px;width:340px;height:1px;background:#525d70;"></div>
<span class="t" style="left:1566.0px;top:802.1px;transform:scaleX(0.9859);color:#f2f2f2;">Pavimento</span>
<div class="r" style="left:1888px;top:803px;width:8px;height:14px;border:1px solid #77829a;box-sizing:border-box"></div>
<div class="r" style="left:1558px;top:837px;width:340px;height:1px;background:#525d70;"></div>
<span class="t" style="left:1566.0px;top:820.1px;transform:scaleX(0.9288);color:#f2f2f2;">Revisão</span>
<div class="r" style="left:1888px;top:821px;width:8px;height:14px;border:1px solid #77829a;box-sizing:border-box"></div>
<div class="r" style="left:1558px;top:855px;width:340px;height:1px;background:#525d70;"></div>
<span class="t" style="left:1566.0px;top:838.1px;transform:scaleX(0.9751);color:#f2f2f2;">Texto - Revisão 01</span>
<div class="r" style="left:1888px;top:839px;width:8px;height:14px;border:1px solid #77829a;box-sizing:border-box"></div>
<div class="r" style="left:1558px;top:873px;width:340px;height:1px;background:#525d70;"></div>
<span class="t" style="left:1566.0px;top:856.1px;transform:scaleX(0.9751);color:#f2f2f2;">Texto - Revisão 02</span>
<div class="r" style="left:1888px;top:857px;width:8px;height:14px;border:1px solid #77829a;box-sizing:border-box"></div>
<div class="r" style="left:1558px;top:891px;width:340px;height:1px;background:#525d70;"></div>
<span class="t" style="left:1566.0px;top:874.1px;transform:scaleX(0.9751);color:#f2f2f2;">Texto - Revisão 03</span>
<div class="r" style="left:1888px;top:875px;width:8px;height:14px;border:1px solid #77829a;box-sizing:border-box"></div>
<div class="r" style="left:1558px;top:909px;width:340px;height:1px;background:#525d70;"></div>
<span class="t" style="left:1566.0px;top:892.1px;transform:scaleX(0.9751);color:#f2f2f2;">Texto - Revisão 04</span>
<div class="r" style="left:1888px;top:893px;width:8px;height:14px;border:1px solid #77829a;box-sizing:border-box"></div>
<div class="r" style="left:1558px;top:927px;width:340px;height:1px;background:#525d70;"></div>
<span class="t" style="left:1566.0px;top:910.1px;transform:scaleX(0.9751);color:#f2f2f2;">Texto - Revisão 05</span>
<div class="r" style="left:1888px;top:911px;width:8px;height:14px;border:1px solid #77829a;box-sizing:border-box"></div>
<div class="r" style="left:1558px;top:945px;width:340px;height:1px;background:#525d70;"></div>
<span class="t" style="left:1566.0px;top:928.1px;transform:scaleX(0.9751);color:#f2f2f2;">Texto - Revisão 06</span>
<div class="r" style="left:1888px;top:929px;width:8px;height:14px;border:1px solid #77829a;box-sizing:border-box"></div>
<div class="r" style="left:1558px;top:963px;width:340px;height:1px;background:#525d70;"></div>
<span class="t" style="left:1566.0px;top:946.1px;transform:scaleX(1.0136);color:#f2f2f2;">Tipo</span>
<div class="r" style="left:1888px;top:947px;width:8px;height:14px;border:1px solid #77829a;box-sizing:border-box"></div>
<div class="r" style="left:1558px;top:964px;width:341px;height:17px;background:#222933;"></div>
<span class="t" style="left:1560.0px;top:963.6px;transform:scaleX(0.9622);color:#f2f2f2;font-weight:bold;">Dados de identidade</span>
<svg style="left:1886px;top:968px" width="7" height="9"><path d="M0.8 4L3.5 1.2L6.2 4M0.8 8L3.5 5.2L6.2 8" fill="none" stroke="#f2f2f2" stroke-width="1.3"/></svg>
<div class="r" style="left:1722px;top:316px;width:1px;height:36px;background:#525d70;"></div>
<div class="r" style="left:1722px;top:370px;width:1px;height:594px;background:#525d70;"></div>
<div class="r" style="left:1885px;top:316px;width:1px;height:36px;background:#525d70;"></div>
<div class="r" style="left:1885px;top:370px;width:1px;height:594px;background:#525d70;"></div>
<div class="r" style="left:1898px;top:316px;width:1px;height:36px;background:#525d70;"></div>
<div class="r" style="left:1898px;top:370px;width:1px;height:594px;background:#525d70;"></div>
<svg style="left:1902.6px;top:302.5px" width="10" height="7"><path d="M0.8 5.8L5 1.6L9.2 5.8" fill="none" stroke="#949cab" stroke-width="1.9"/></svg>
<svg style="left:1902.6px;top:969.5px" width="10" height="7"><path d="M0.8 1.2L5 5.4L9.2 1.2" fill="none" stroke="#949cab" stroke-width="1.9"/></svg>
<div class="r" style="left:1903.6px;top:315px;width:8.3px;height:230px;background:#7988a0;border-radius:4px"></div>
<div class="r" style="left:1560px;top:982px;width:20px;height:21px;background:#2f7099;border-radius:2px"></div>
<div class="r" style="left:1585px;top:982px;width:20px;height:21px;background:#394150;"></div>
<div class="r" style="left:1610px;top:982px;width:20px;height:21px;background:#394150;"></div>
<svg style="left:1563px;top:985px" width="15" height="15"><path d="M0 4.5H7M0 8H5M0 11.5H7" stroke="#dfe6ee" stroke-width="1.3"/><path d="M11 2V13" stroke="#fff" stroke-width="1"/><polygon points="9,5 11,1.5 13,5" fill="#fff"/><polygon points="9,10.5 11,14 13,10.5" fill="#fff"/></svg>
<span class="t" style="left:1588.0px;top:982.9px;transform:scaleX(0.9544);color:#5aa3d8;font-size:8px;line-height:10.67px;">A</span>
<span class="t" style="left:1588.0px;top:990.9px;transform:scaleX(0.9216);color:#d8d8d8;font-size:8px;line-height:10.67px;">Z</span>
<svg style="left:1596px;top:985px" width="6" height="15"><path d="M3 0V12" stroke="#e0e0e0" stroke-width="1.2"/><polygon points="0.5,10.5 3,14.5 5.5,10.5" fill="#e0e0e0"/></svg>
<span class="t" style="left:1613.0px;top:982.9px;transform:scaleX(0.9216);color:#d8d8d8;font-size:8px;line-height:10.67px;">Z</span>
<span class="t" style="left:1613.0px;top:990.9px;transform:scaleX(0.9544);color:#5aa3d8;font-size:8px;line-height:10.67px;">A</span>
<svg style="left:1621px;top:985px" width="6" height="15"><path d="M3 0V12" stroke="#e0e0e0" stroke-width="1.2"/><polygon points="0.5,10.5 3,14.5 5.5,10.5" fill="#e0e0e0"/></svg>
<div class="r" style="left:1843.5px;top:982.3px;width:69px;height:18px;border:1px solid #5b667c;box-sizing:border-box;border-radius:2px"></div>
<span class="t" style="left:1860.5px;top:983.6px;transform:scaleX(0.9579);color:#7f8999;font-size:12.5px;line-height:16.67px;">Aplicar</span>
<!-- sec_status -->
<div class="r" style="left:0px;top:1004px;width:1917px;height:1px;background:#2c333f;"></div>
<div class="r" style="left:0px;top:1005px;width:1917px;height:28px;background:#3b4453;"></div>
<div class="r" style="left:0px;top:1030px;width:1917px;height:3px;background:#2b2e35;"></div>
<span class="t" style="left:5.0px;top:1010.1px;transform:scaleX(0.9527);color:#f2f2f2;">Blocos de margens e carimbo : FORMATO_HJ_EXEC sem legenda de luminarias : A0</span>
<span class="t" style="left:1204.4px;top:1012.1px;transform:scaleX(1.0209);color:#7f8998;">Modelo principal</span>
<span class="t" style="left:1117.0px;top:1012.1px;transform:scaleX(0.9064);color:#aab1bd;">:0</span>
<span class="t" style="left:1815.5px;top:1010.3px;transform:scaleX(0.9064);color:#f2f2f2;font-size:12.5px;line-height:16.67px;">:0</span>
<svg style="left:860px;top:1008.5px" width="18" height="18"><polygon points="1,4 4,2.5 7,4 7,13 4,14.5 1,13" fill="#5aa8e8"/><polygon points="5,7 8,5.5 11,7 11,15 8,16.5 5,15" fill="#5ec46a"/><polygon points="8,2.5 11,1 14,2.5 14,9 11,10.5 8,9" fill="#ee9a5a"/><path d="M10.5 15L15.5 10" stroke="#4a9ae8" stroke-width="1.8"/><circle cx="15.3" cy="9.8" r="1.8" fill="none" stroke="#4a9ae8" stroke-width="1.2"/></svg>
<svg style="left:1080px;top:1016px" width="8" height="6"><path d="M1 1L4 4.2L7 1" fill="none" stroke="#5f6a7c" stroke-width="1.4"/></svg>
<svg style="left:1099.5px;top:1009px" width="16" height="16"><polygon points="7,0.5 15,0.5 15,5 11,5 9,12 6,12 8,5 7,5" fill="#a3aab6"/><rect x="0.5" y="10" width="9" height="5" fill="#a3aab6"/></svg>
<svg style="left:1150.5px;top:1009px" width="17" height="17"><rect x="0.5" y="0.5" width="16" height="16" fill="#f4f4f4"/><rect x="0.5" y="0.5" width="16" height="2.6" fill="#d0d0d0"/><path d="M5.5 6H14.5M5.5 9.3H14.5M5.5 12.6H14.5" stroke="#333" stroke-width="1.3"/><rect x="2.3" y="5.3" width="1.6" height="1.5" fill="#333"/><rect x="2.3" y="8.6" width="1.6" height="1.5" fill="#333"/><rect x="2.3" y="11.9" width="1.6" height="1.5" fill="#333"/></svg>
<svg style="left:1177px;top:1009px" width="17" height="17"><rect x="3.5" y="0.5" width="13" height="12" fill="#a3aab6"/><path d="M6 4H14M6 6.8H14M6 9.6H14" stroke="#3b4453" stroke-width="1.1"/><path d="M6 12.5V16M0.5 13.6H8" stroke="#a3aab6" stroke-width="1.2"/></svg>
<svg style="left:1396px;top:1016px" width="8" height="6"><path d="M1 1L4 4.2L7 1" fill="none" stroke="#5f6a7c" stroke-width="1.4"/></svg>
<svg style="left:1643px;top:1009px" width="17" height="18"><g fill="none" stroke="#e3a877" stroke-width="1.4"><rect x="1" y="1" width="7.5" height="4.6" rx="2.3"/><rect x="6.5" y="1" width="7.5" height="4.6" rx="2.3"/></g><polygon points="7.5,5.2 7.5,15.7 10.1,13.4 12.1,17.5 13.8,16.7 11.8,12.7 15.1,12.7" fill="#f4f4f4" stroke="#3b4453" stroke-width="0.6"/></svg>
<svg style="left:1670px;top:1009px" width="17" height="18"><polygon points="0.5,8.5 7,1.5 9,4 12,4 12,8.5" fill="#69b4ee"/><polygon points="2,11.5 12,11.5 12,9.5 4,9.5" fill="#69b4ee"/><path d="M9.5 0.8L15 6.3M15 0.8L9.5 6.3" stroke="#e8343c" stroke-width="1.8"/><polygon points="7.5,5.2 7.5,15.7 10.1,13.4 12.1,17.5 13.8,16.7 11.8,12.7 15.1,12.7" fill="#f4f4f4" stroke="#3b4453" stroke-width="0.6"/></svg>
<svg style="left:1696px;top:1009px" width="15" height="18"><path d="M3 1H10V3.5H8.5V7L11 9.5H1.5L4 7V3.5H3Z" fill="#c6c6c6"/><path d="M6.3 9.5V15" stroke="#9a9a9a" stroke-width="1"/><polygon points="6.8,5.2 6.8,15.7 9.4,13.4 11.4,17.5 13.1,16.7 11.1,12.7 14.4,12.7" fill="#f4f4f4" stroke="#3b4453" stroke-width="0.6"/></svg>
<svg style="left:1724px;top:1008.5px" width="15" height="18"><polygon points="1,4 9.5,0.5 9.5,14 1,17.5" fill="#7cc0f4"/><polygon points="7.0,5.7 7.0,16.2 9.6,13.9 11.6,18.0 13.3,17.2 11.3,13.2 14.6,13.2" fill="#f4f4f4" stroke="#3b4453" stroke-width="0.6"/></svg>
<svg style="left:1748px;top:1009px" width="17" height="18"><path d="M6.5 0.5V12M1 6.5H9" stroke="#f0f0f0" stroke-width="1.1"/><polygon points="4.5,3 6.5,0 8.5,3" fill="#f0f0f0"/><polygon points="3,4.5 0,6.5 3,8.5" fill="#f0f0f0"/><path d="M10 0.8L15.5 6.3M15.5 0.8L10 6.3" stroke="#e8343c" stroke-width="1.8"/><polygon points="8.3,5.2 8.3,15.7 10.9,13.4 12.9,17.5 14.6,16.7 12.6,12.7 15.9,12.7" fill="#f4f4f4" stroke="#3b4453" stroke-width="0.6"/></svg>
<svg style="left:1774px;top:1009px" width="15" height="15"><circle cx="13.5" cy="7.5" r="1.4" fill="#6c7584"/><circle cx="11.7" cy="11.7" r="1.4" fill="#6c7584"/><circle cx="7.5" cy="13.5" r="1.4" fill="#6c7584"/><circle cx="3.3" cy="11.7" r="1.4" fill="#6c7584"/><circle cx="1.5" cy="7.5" r="1.4" fill="#6c7584"/><circle cx="3.3" cy="3.3" r="1.4" fill="#6c7584"/><circle cx="7.5" cy="1.5" r="1.4" fill="#6c7584"/><circle cx="11.7" cy="3.3" r="1.4" fill="#6c7584"/></svg>
<svg style="left:1797.5px;top:1009.5px" width="17" height="16"><polygon points="0.3,0.3 16.5,0.3 10,8 10,13 6.8,15.5 6.8,8" fill="#c9c9c9"/></svg>
</body></html>
